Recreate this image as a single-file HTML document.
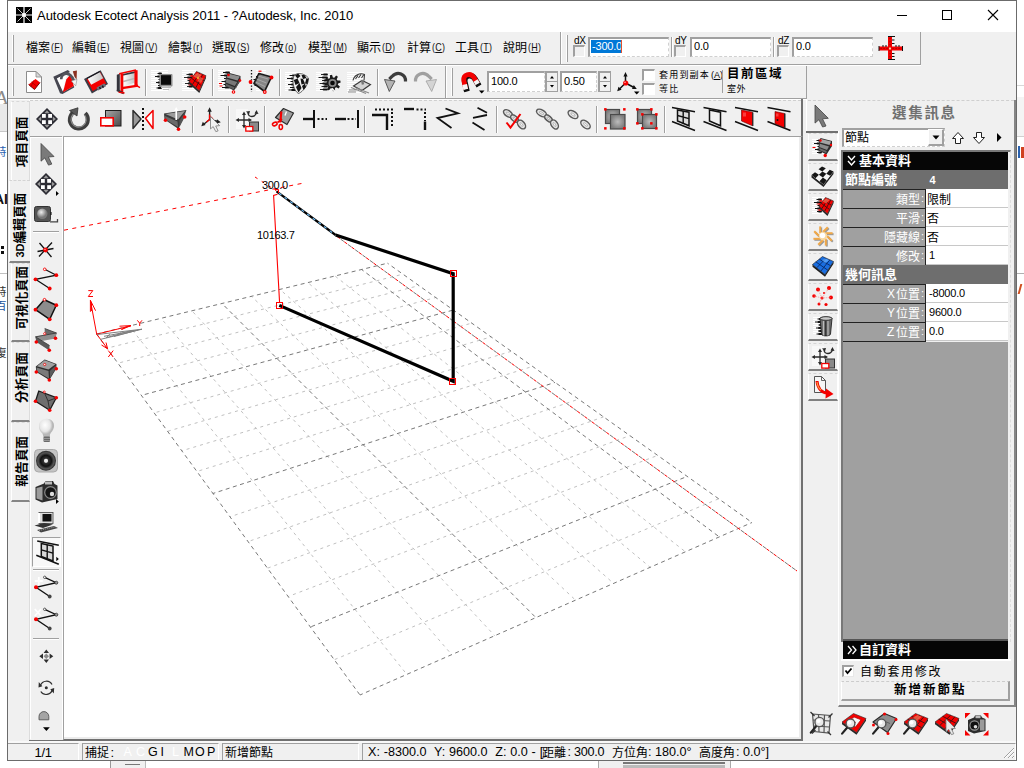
<!DOCTYPE html>
<html><head><meta charset="utf-8"><title>Autodesk Ecotect Analysis 2011</title><style>
html,body{margin:0;padding:0}
body{width:1024px;height:768px;overflow:hidden;position:relative;background:#fff;font-family:"Liberation Sans",sans-serif}
div,span,svg{position:absolute;box-sizing:border-box}
span{white-space:pre;line-height:1}
svg{overflow:visible}
svg text{font-family:"Liberation Sans","Noto Sans CJK TC",sans-serif}
</style></head><body>
<div style="left:0px;top:104px;width:7px;height:28px;background:#e9e9e9"></div>
<div style="left:0px;top:131px;width:7px;height:1px;background:#c8c8c8"></div>
<div style="left:0px;top:273px;width:7px;height:1px;background:#c0c0c0"></div>
<span style="left:-5px;top:88px;font-family:'Liberation Serif',serif;font-size:19px;color:#8a8a8a">A</span>
<span style="left:-6px;top:192px;font-family:'Liberation Sans',sans-serif;font-weight:bold;font-size:14px;color:#111">AI</span>
<div style="left:1px;top:246px;width:3px;height:3px;background:#111"></div>
<div style="left:1px;top:251px;width:3px;height:3px;background:#111"></div>
<svg aria-label="特" style="left:-5px;top:146px" width="15" height="16" viewBox="0 0 15 16"><text x="0" y="10.12" font-size="11.5" fill="#2a62b0">特</text></svg>
<svg aria-label="特" style="left:-5px;top:286px" width="15" height="16" viewBox="0 0 15 16"><text x="0" y="10.12" font-size="11.5" fill="#333">特</text></svg>
<svg aria-label="百" style="left:-5px;top:300px" width="15" height="16" viewBox="0 0 15 16"><text x="0" y="10.12" font-size="11.5" fill="#24569c">百</text></svg>
<svg aria-label="復" style="left:-5px;top:347px" width="15" height="16" viewBox="0 0 15 16"><text x="0" y="10.12" font-size="11.5" fill="#333">復</text></svg>
<div style="left:1017px;top:97px;width:7px;height:39px;background:#f4f4f4"></div>
<div style="left:1017px;top:136px;width:7px;height:1px;background:#d0d0d0"></div>
<div style="left:1017px;top:85px;width:7px;height:1px;background:#d8d8d8"></div>
<div style="left:1017px;top:273px;width:7px;height:1px;background:#b0b0b0"></div>
<div style="left:1018px;top:146px;width:2px;height:12px;background:#2a62b0"></div>
<div style="left:1021px;top:147px;width:3px;height:11px;background:#d04020"></div>
<div style="left:1019px;top:284px;width:2px;height:10px;background:#d05020;transform:skewX(-15deg)"></div>
<div style="left:110px;top:761px;width:36px;height:7px;background:#f0f0f0;border-left:1px solid #999;border-right:1px solid #bbb"></div>
<div style="left:125px;top:764px;width:15px;height:1px;background:#777"></div>
<div style="left:598px;top:761px;width:133px;height:7px;background:#f0f0f0;border-left:1px solid #aaa;border-right:1px solid #aaa"></div>
<div style="left:623px;top:762px;width:102px;height:2px;background:#777"></div>
<div style="left:623px;top:765px;width:102px;height:3px;background:#bbb"></div>
<div style="left:7px;top:0px;width:1010px;height:761px;background:#f0f0f0;border:1px solid #6b6b6b"></div>
<div style="left:8px;top:1px;width:1008px;height:31px;background:#fff"></div>
<svg style="left:16px;top:7px" width="16" height="16" viewBox="0 0 16 16"><rect width="16" height="16" fill="#000"/><path d="M0 8H16M8 0V16" stroke="#fff" stroke-width="1.2"/><path d="M1.5 1.5L14.5 14.5M14.5 1.5L1.5 14.5" stroke="#ddd" stroke-width="0.9"/><circle cx="8" cy="8" r="2" fill="#fff"/></svg>
<span style="left:37px;top:9px;font-size:13px;color:#000;letter-spacing:-0.03px">Autodesk Ecotect Analysis 2011 - ?Autodesk, Inc. 2010</span>
<svg style="left:890px;top:5px" width="120" height="22" viewBox="890 5 120 22"><path d="M897 15.5H907" stroke="#000" stroke-width="1"/><rect x="942.5" y="10.5" width="9" height="9" fill="none" stroke="#000" stroke-width="1"/><path d="M988 10L998 20M998 10L988 20" stroke="#000" stroke-width="1.1"/></svg>
<div style="left:8px;top:64px;width:913px;height:1px;background:#a0a0a0"></div>
<div style="left:8px;top:65px;width:913px;height:1px;background:#fff"></div>
<div style="left:12px;top:35px;width:1px;height:27px;background:#fff"></div>
<div style="left:13px;top:35px;width:1px;height:27px;background:#a0a0a0"></div>
<div style="left:560px;top:32px;width:1px;height:32px;background:#a0a0a0"></div>
<div style="left:561px;top:32px;width:1px;height:32px;background:#fff"></div>
<div style="left:566px;top:35px;width:1px;height:27px;background:#fff"></div>
<div style="left:567px;top:35px;width:1px;height:27px;background:#a0a0a0"></div>
<div style="left:920px;top:32px;width:1px;height:33px;background:#a0a0a0"></div>
<svg aria-label="檔案" style="left:26px;top:41px" width="28" height="17" viewBox="0 0 28 17"><text x="0" y="10.56" font-size="12" fill="#000">檔案</text></svg>
<span style="left:50.5px;top:41.5px;font-size:11.5px;color:#111;transform:scaleX(0.78);transform-origin:0 0;letter-spacing:0.3px">(<u>F</u>)</span>
<svg aria-label="編輯" style="left:72px;top:41px" width="28" height="17" viewBox="0 0 28 17"><text x="0" y="10.56" font-size="12" fill="#000">編輯</text></svg>
<span style="left:96.5px;top:41.5px;font-size:11.5px;color:#111;transform:scaleX(0.78);transform-origin:0 0;letter-spacing:0.3px">(<u>E</u>)</span>
<svg aria-label="視圖" style="left:120px;top:41px" width="28" height="17" viewBox="0 0 28 17"><text x="0" y="10.56" font-size="12" fill="#000">視圖</text></svg>
<span style="left:144.5px;top:41.5px;font-size:11.5px;color:#111;transform:scaleX(0.78);transform-origin:0 0;letter-spacing:0.3px">(<u>V</u>)</span>
<svg aria-label="繪製" style="left:168px;top:41px" width="28" height="17" viewBox="0 0 28 17"><text x="0" y="10.56" font-size="12" fill="#000">繪製</text></svg>
<span style="left:192.5px;top:41.5px;font-size:11.5px;color:#111;transform:scaleX(0.78);transform-origin:0 0;letter-spacing:0.3px">(<u>r</u>)</span>
<svg aria-label="選取" style="left:212px;top:41px" width="28" height="17" viewBox="0 0 28 17"><text x="0" y="10.56" font-size="12" fill="#000">選取</text></svg>
<span style="left:236.5px;top:41.5px;font-size:11.5px;color:#111;transform:scaleX(0.78);transform-origin:0 0;letter-spacing:0.3px">(<u>S</u>)</span>
<svg aria-label="修改" style="left:260px;top:41px" width="28" height="17" viewBox="0 0 28 17"><text x="0" y="10.56" font-size="12" fill="#000">修改</text></svg>
<span style="left:284.5px;top:41.5px;font-size:11.5px;color:#111;transform:scaleX(0.78);transform-origin:0 0;letter-spacing:0.3px">(<u>o</u>)</span>
<svg aria-label="模型" style="left:308px;top:41px" width="28" height="17" viewBox="0 0 28 17"><text x="0" y="10.56" font-size="12" fill="#000">模型</text></svg>
<span style="left:332.5px;top:41.5px;font-size:11.5px;color:#111;transform:scaleX(0.78);transform-origin:0 0;letter-spacing:0.3px">(<u>M</u>)</span>
<svg aria-label="顯示" style="left:357px;top:41px" width="28" height="17" viewBox="0 0 28 17"><text x="0" y="10.56" font-size="12" fill="#000">顯示</text></svg>
<span style="left:381.5px;top:41.5px;font-size:11.5px;color:#111;transform:scaleX(0.78);transform-origin:0 0;letter-spacing:0.3px">(<u>D</u>)</span>
<svg aria-label="計算" style="left:407px;top:41px" width="28" height="17" viewBox="0 0 28 17"><text x="0" y="10.56" font-size="12" fill="#000">計算</text></svg>
<span style="left:431.5px;top:41.5px;font-size:11.5px;color:#111;transform:scaleX(0.78);transform-origin:0 0;letter-spacing:0.3px">(<u>C</u>)</span>
<svg aria-label="工具" style="left:455px;top:41px" width="28" height="17" viewBox="0 0 28 17"><text x="0" y="10.56" font-size="12" fill="#000">工具</text></svg>
<span style="left:479.5px;top:41.5px;font-size:11.5px;color:#111;transform:scaleX(0.78);transform-origin:0 0;letter-spacing:0.3px">(<u>T</u>)</span>
<svg aria-label="說明" style="left:503px;top:41px" width="28" height="17" viewBox="0 0 28 17"><text x="0" y="10.56" font-size="12" fill="#000">說明</text></svg>
<span style="left:527.5px;top:41.5px;font-size:11.5px;color:#111;transform:scaleX(0.78);transform-origin:0 0;letter-spacing:0.3px">(<u>H</u>)</span>
<span style="left:574px;top:36px;font-size:10px;color:#000;letter-spacing:-0.4px">dX</span>
<div style="left:573px;top:45px;width:12px;height:12px;background:#f0f0f0;border-top:2px solid #a0a0a0;border-left:2px solid #a0a0a0;border-bottom:1px solid #fff;border-right:1px solid #fff"></div>
<div style="left:588px;top:37px;width:81px;height:20px;background:#fff;border-top:2px solid #a0a0a0;border-left:2px solid #a0a0a0;border-bottom:1px dashed #d0d0d0;border-right:1px dashed #d0d0d0"></div>
<div style="left:591px;top:40px;width:30px;height:13px;background:#0078d7"></div>
<span style="left:592px;top:41px;font-size:11px;color:#fff;letter-spacing:-0.2px">-300.0</span>
<div style="left:621px;top:40px;width:1px;height:13px;background:#e05030"></div>
<span style="left:675px;top:36px;font-size:10px;color:#000;letter-spacing:-0.4px">dY</span>
<div style="left:674px;top:45px;width:12px;height:12px;background:#f0f0f0;border-top:2px solid #a0a0a0;border-left:2px solid #a0a0a0;border-bottom:1px solid #fff;border-right:1px solid #fff"></div>
<div style="left:690px;top:37px;width:81px;height:20px;background:#fff;border-top:2px solid #a0a0a0;border-left:2px solid #a0a0a0;border-bottom:1px dashed #d0d0d0;border-right:1px dashed #d0d0d0"></div>
<span style="left:694px;top:41px;font-size:11px;color:#000;letter-spacing:-0.2px">0.0</span>
<span style="left:778px;top:36px;font-size:10px;color:#000;letter-spacing:-0.4px">dZ</span>
<div style="left:777px;top:45px;width:12px;height:12px;background:#f0f0f0;border-top:2px solid #a0a0a0;border-left:2px solid #a0a0a0;border-bottom:1px solid #fff;border-right:1px solid #fff"></div>
<div style="left:792px;top:37px;width:81px;height:20px;background:#fff;border-top:2px solid #a0a0a0;border-left:2px solid #a0a0a0;border-bottom:1px dashed #d0d0d0;border-right:1px dashed #d0d0d0"></div>
<span style="left:796px;top:41px;font-size:11px;color:#000;letter-spacing:-0.2px">0.0</span>
<div style="left:671px;top:37px;width:1px;height:20px;background:#a0a0a0"></div>
<div style="left:672px;top:37px;width:1px;height:20px;background:#fff"></div>
<div style="left:773px;top:37px;width:1px;height:20px;background:#a0a0a0"></div>
<div style="left:774px;top:37px;width:1px;height:20px;background:#fff"></div>
<div style="left:8px;top:98px;width:799px;height:1px;background:#a0a0a0"></div>
<div style="left:8px;top:99px;width:799px;height:1px;background:#fff"></div>
<div style="left:12px;top:68px;width:1px;height:28px;background:#fff"></div>
<div style="left:13px;top:68px;width:1px;height:28px;background:#a0a0a0"></div>
<div style="left:445px;top:66px;width:1px;height:32px;background:#a0a0a0"></div>
<div style="left:446px;top:66px;width:1px;height:32px;background:#fff"></div>
<div style="left:451px;top:68px;width:1px;height:28px;background:#fff"></div>
<div style="left:452px;top:68px;width:1px;height:28px;background:#a0a0a0"></div>
<div style="left:806px;top:66px;width:1px;height:33px;background:#a0a0a0"></div>
<div style="left:145px;top:69px;width:1px;height:27px;background:#a0a0a0"></div>
<div style="left:146px;top:69px;width:1px;height:27px;background:#fff"></div>
<div style="left:212px;top:69px;width:1px;height:27px;background:#a0a0a0"></div>
<div style="left:213px;top:69px;width:1px;height:27px;background:#fff"></div>
<div style="left:279px;top:69px;width:1px;height:27px;background:#a0a0a0"></div>
<div style="left:280px;top:69px;width:1px;height:27px;background:#fff"></div>
<div style="left:377px;top:69px;width:1px;height:27px;background:#a0a0a0"></div>
<div style="left:378px;top:69px;width:1px;height:27px;background:#fff"></div>
<div style="left:487px;top:71px;width:58px;height:21px;background:#fff;border-top:2px solid #a0a0a0;border-left:2px solid #a0a0a0;border-bottom:1px dashed #d0d0d0;border-right:1px dashed #d0d0d0"></div>
<span style="left:491px;top:76px;font-size:11px;color:#000;letter-spacing:-0.2px">100.0</span>
<div style="left:560px;top:71px;width:37px;height:21px;background:#fff;border-top:2px solid #a0a0a0;border-left:2px solid #a0a0a0;border-bottom:1px dashed #d0d0d0;border-right:1px dashed #d0d0d0"></div>
<span style="left:564px;top:76px;font-size:11px;color:#000;letter-spacing:-0.2px">0.50</span>
<div style="left:545px;top:71px;width:13px;height:21px;background:#f0f0f0;border:1px solid #a0a0a0;border-left:2px solid #a0a0a0;border-top:2px solid #a0a0a0"></div>
<div style="left:547px;top:81px;width:10px;height:1px;background:#a0a0a0"></div>
<svg style="left:545px;top:71px" width="13" height="21" viewBox="0 0 13 21"><path d="M5 7.5L7 5L9 7.5ZM5 14L7 16.5L9 14Z" fill="#000"/></svg>
<div style="left:598px;top:71px;width:13px;height:21px;background:#f0f0f0;border:1px solid #a0a0a0;border-left:2px solid #a0a0a0;border-top:2px solid #a0a0a0"></div>
<div style="left:600px;top:81px;width:10px;height:1px;background:#a0a0a0"></div>
<svg style="left:598px;top:71px" width="13" height="21" viewBox="0 0 13 21"><path d="M5 7.5L7 5L9 7.5ZM5 14L7 16.5L9 14Z" fill="#000"/></svg>
<div style="left:642px;top:69px;width:13px;height:12px;background:#fff;border-top:2px solid #a0a0a0;border-left:2px solid #a0a0a0;border-bottom:1px solid #fff;border-right:1px solid #fff"></div>
<div style="left:642px;top:83px;width:13px;height:12px;background:#fff;border-top:2px solid #a0a0a0;border-left:2px solid #a0a0a0;border-bottom:1px solid #fff;border-right:1px solid #fff"></div>
<svg aria-label="套用到副本" style="left:659px;top:70px" width="53" height="13" viewBox="0 0 53 13"><text x="0" y="7.92" font-size="9" letter-spacing="1.2" fill="#000">套用到副本</text></svg>
<span style="left:711px;top:71px;font-size:9px;color:#000;letter-spacing:0px">(<u>A</u>)</span>
<svg aria-label="等比" style="left:659px;top:84px" width="23" height="13" viewBox="0 0 23 13"><text x="0" y="7.92" font-size="9" letter-spacing="1.2" fill="#000">等比</text></svg>
<div style="left:722px;top:70px;width:1px;height:23px;background:#a0a0a0"></div>
<svg aria-label="目前區域" style="left:727px;top:67px" width="59" height="18" viewBox="0 0 59 18"><text x="0" y="11" font-size="12.5" font-weight="bold" letter-spacing="1.5" fill="#000">目前區域</text></svg>
<svg aria-label="室外" style="left:727px;top:84px" width="22" height="13" viewBox="0 0 22 13"><text x="0" y="7.92" font-size="9" letter-spacing="0.5" fill="#000">室外</text></svg>
<div style="left:30px;top:100px;width:771px;height:1px;border-top:1px dashed #cfcfcf"></div>
<div style="left:29px;top:100px;width:1px;height:402px;background:#fff"></div>
<div style="left:801px;top:99px;width:2px;height:40px;background:#707070"></div>
<div style="left:192px;top:106px;width:1px;height:27px;background:#a0a0a0"></div>
<div style="left:193px;top:106px;width:1px;height:27px;background:#fff"></div>
<div style="left:228px;top:106px;width:1px;height:27px;background:#a0a0a0"></div>
<div style="left:229px;top:106px;width:1px;height:27px;background:#fff"></div>
<div style="left:264px;top:106px;width:1px;height:27px;background:#a0a0a0"></div>
<div style="left:265px;top:106px;width:1px;height:27px;background:#fff"></div>
<div style="left:364px;top:106px;width:1px;height:27px;background:#a0a0a0"></div>
<div style="left:365px;top:106px;width:1px;height:27px;background:#fff"></div>
<div style="left:496px;top:106px;width:1px;height:27px;background:#a0a0a0"></div>
<div style="left:497px;top:106px;width:1px;height:27px;background:#fff"></div>
<div style="left:596px;top:106px;width:1px;height:27px;background:#a0a0a0"></div>
<div style="left:597px;top:106px;width:1px;height:27px;background:#fff"></div>
<div style="left:664px;top:106px;width:1px;height:27px;background:#a0a0a0"></div>
<div style="left:665px;top:106px;width:1px;height:27px;background:#fff"></div>
<div style="left:11px;top:101px;width:19px;height:79px;background:#f0f0f0;border-left:1px solid #fff;border-top:1px dashed #d8d8d8;border-right:1px solid #dcdcdc"></div>
<div style="left:9px;top:180px;width:21px;height:83px;background:#f0f0f0;border-left:1px solid #fff;border-top:1px dashed #d4d4d4;border-bottom:2px solid #858585"></div>
<div style="left:11px;top:263px;width:19px;height:79px;background:#f0f0f0;border-left:1px solid #fff;border-top:1px dashed #d8d8d8;border-right:1px solid #dcdcdc;border-bottom:2px solid #858585"></div>
<div style="left:11px;top:342px;width:19px;height:80px;background:#f0f0f0;border-left:1px solid #fff;border-top:1px dashed #d8d8d8;border-right:1px solid #dcdcdc;border-bottom:2px solid #858585"></div>
<div style="left:11px;top:422px;width:19px;height:80px;background:#f0f0f0;border-left:1px solid #fff;border-top:1px dashed #d8d8d8;border-right:1px solid #dcdcdc;border-bottom:2px solid #858585"></div>
<div style="left:29px;top:502px;width:1px;height:238px;background:#dcdcdc"></div>
<svg aria-label="項目頁面" style="left:0;top:0" width="40" height="520" viewBox="0 0 40 520"><text transform="translate(25.5,167.3) rotate(-90)" x="0" y="0" font-size="12.7" font-weight="bold" fill="#000">項目頁面</text></svg>
<svg aria-label="3D編輯頁面" style="left:0;top:0" width="40" height="520" viewBox="0 0 40 520"><text transform="translate(23.5,257.5) rotate(-90)" x="0" y="0" font-size="12.7" font-weight="bold" fill="#000"><tspan font-size="11">3D</tspan>編輯頁面</text></svg>
<svg aria-label="可視化頁面" style="left:0;top:0" width="40" height="520" viewBox="0 0 40 520"><text transform="translate(25.5,329.6) rotate(-90)" x="0" y="0" font-size="12.7" font-weight="bold" fill="#000">可視化頁面</text></svg>
<svg aria-label="分析頁面" style="left:0;top:0" width="40" height="520" viewBox="0 0 40 520"><text transform="translate(25.5,402.9) rotate(-90)" x="0" y="0" font-size="12.7" font-weight="bold" fill="#000">分析頁面</text></svg>
<svg aria-label="報告頁面" style="left:0;top:0" width="40" height="520" viewBox="0 0 40 520"><text transform="translate(25.5,486.7) rotate(-90)" x="0" y="0" font-size="12.7" font-weight="bold" fill="#000">報告頁面</text></svg>
<div style="left:30px;top:136px;width:32px;height:1px;background:#a0a0a0"></div>
<div style="left:30px;top:137px;width:32px;height:1px;background:#fff"></div>
<div style="left:30px;top:137px;width:1px;height:602px;background:#fff"></div>
<div style="left:62px;top:137px;width:1px;height:602px;background:#fff"></div>
<div style="left:33px;top:231px;width:26px;height:1px;background:#a0a0a0"></div>
<div style="left:33px;top:232px;width:26px;height:1px;background:#fff"></div>
<div style="left:33px;top:569px;width:26px;height:1px;background:#a0a0a0"></div>
<div style="left:33px;top:570px;width:26px;height:1px;background:#fff"></div>
<div style="left:33px;top:638px;width:26px;height:1px;background:#a0a0a0"></div>
<div style="left:33px;top:639px;width:26px;height:1px;background:#fff"></div>
<div style="left:32px;top:537px;width:29px;height:30px;background:#f8f8f8;border-top:1px solid #a0a0a0;border-left:1px solid #a0a0a0;border-right:1px solid #fff;border-bottom:1px solid #fff"></div>
<div style="left:63px;top:136px;width:740px;height:605px;background:#ececec;border-left:1px solid #a0a0a0;border-top:1px solid #a0a0a0;border-right:2px solid #707070;border-bottom:2px solid #707070"></div>
<div style="left:64px;top:137px;width:735px;height:600px;background:#fff"></div>
<div style="left:29px;top:740px;width:773px;height:1px;background:#707070"></div>
<div style="left:808px;top:100px;width:206px;height:1px;border-top:1px dashed #cfcfcf"></div>
<div style="left:806px;top:99px;width:1px;height:33px;background:#fff"></div>
<div style="left:838px;top:131px;width:178px;height:576px;border-left:1px solid #fff;border-bottom:2px solid #858585"></div>
<div style="left:1014px;top:100px;width:2px;height:607px;background:#858585"></div>
<div style="left:806px;top:101px;width:32px;height:32px;border-bottom:2px solid #707070"></div>
<div style="left:808px;top:133px;width:30px;height:28px;border-top:1px dashed #d4d4d4;border-left:1px solid #fff;border-bottom:2px solid #808080;border-right:1px solid #fff"></div>
<div style="left:808px;top:163px;width:30px;height:28px;border-top:1px dashed #d4d4d4;border-left:1px solid #fff;border-bottom:2px solid #808080;border-right:1px solid #fff"></div>
<div style="left:808px;top:193px;width:30px;height:28px;border-top:1px dashed #d4d4d4;border-left:1px solid #fff;border-bottom:2px solid #808080;border-right:1px solid #fff"></div>
<div style="left:808px;top:223px;width:30px;height:28px;border-top:1px dashed #d4d4d4;border-left:1px solid #fff;border-bottom:2px solid #808080;border-right:1px solid #fff"></div>
<div style="left:808px;top:253px;width:30px;height:28px;border-top:1px dashed #d4d4d4;border-left:1px solid #fff;border-bottom:2px solid #808080;border-right:1px solid #fff"></div>
<div style="left:808px;top:283px;width:30px;height:28px;border-top:1px dashed #d4d4d4;border-left:1px solid #fff;border-bottom:2px solid #808080;border-right:1px solid #fff"></div>
<div style="left:808px;top:313px;width:30px;height:28px;border-top:1px dashed #d4d4d4;border-left:1px solid #fff;border-bottom:2px solid #808080;border-right:1px solid #fff"></div>
<div style="left:808px;top:343px;width:30px;height:28px;border-top:1px dashed #d4d4d4;border-left:1px solid #fff;border-bottom:2px solid #808080;border-right:1px solid #fff"></div>
<div style="left:808px;top:373px;width:30px;height:28px;border-top:1px dashed #d4d4d4;border-left:1px solid #fff;border-bottom:2px solid #808080;border-right:1px solid #fff"></div>
<svg aria-label="選集訊息" style="left:892px;top:105px" width="67" height="20" viewBox="0 0 67 20"><text x="0" y="12.76" font-size="14.5" font-weight="bold" letter-spacing="1.7" fill="#707070">選集訊息</text></svg>
<div style="left:842px;top:128px;width:103px;height:19px;background:#fff;border-top:2px solid #a0a0a0;border-left:2px solid #a0a0a0;border-bottom:1px dashed #d0d0d0;border-right:1px dashed #d0d0d0"></div>
<svg aria-label="節點" style="left:845px;top:131px" width="28" height="17" viewBox="0 0 28 17"><text x="0" y="10.56" font-size="12" fill="#000">節點</text></svg>
<div style="left:928px;top:129px;width:16px;height:17px;background:#f0f0f0;border:1px solid #a0a0a0;border-left:1px solid #fff;border-top:1px solid #fff;border-right:2px solid #a0a0a0;border-bottom:2px solid #a0a0a0"></div>
<svg style="left:928px;top:129px" width="16" height="17" viewBox="0 0 16 17"><path d="M4.5 6.5H11.5L8 10.5Z" fill="#000"/></svg>
<svg style="left:950px;top:130px" width="56" height="16" viewBox="950 130 56 16"><path d="M958 132.5L963.5 138.5H960.5V143.5H955.5V138.5H952.5Z" fill="#fff" stroke="#222" stroke-width="1"/><path d="M979 143.5L984.5 137.5H981.5V132.5H976.5V137.5H973.5Z" fill="#fff" stroke="#222" stroke-width="1"/><path d="M997 133L1001.5 137.5L997 142Z" fill="#000"/></svg>
<div style="left:841px;top:150px;width:170px;height:492px;border-top:2px solid #787878;border-left:2px solid #787878;border-right:1px dashed #ddd"></div>
<div style="left:843px;top:152px;width:165px;height:18px;background:#060606"></div>
<svg style="left:846px;top:154px" width="12" height="14" viewBox="0 0 12 14"><path d="M2 2L5.5 6L9 2M2 7L5.5 11L9 7" fill="none" stroke="#fff" stroke-width="1.4"/></svg>
<svg aria-label="基本資料" style="left:859px;top:154px" width="56" height="18" viewBox="0 0 56 18"><text x="0" y="11.44" font-size="13" font-weight="bold" fill="#fff">基本資料</text></svg>
<div style="left:843px;top:170px;width:165px;height:19px;background:#6e6e6e"></div>
<svg aria-label="節點編號" style="left:845px;top:173px" width="56" height="18" viewBox="0 0 56 18"><text x="0" y="11.44" font-size="13" font-weight="bold" fill="#fff">節點編號</text></svg>
<span style="left:929.5px;top:175px;font-size:11px;color:#fff;font-weight:bold">4</span>
<div style="left:843px;top:189px;width:83px;height:19px;background:#a0a0a0;border-top:1px solid #222;border-right:1px solid #222;"></div>
<div style="left:926px;top:189px;width:82px;height:19px;background:#fff;border-bottom:1px solid #c8c8c8"></div>
<svg aria-label="類型" style="left:896.0px;top:193px" width="28" height="17" viewBox="0 0 28 17"><text x="0" y="10.56" font-size="12" fill="#fff">類型</text></svg>
<span style="left:921px;top:193px;font-size:11px;color:#fff;">:</span>
<svg aria-label="限制" style="left:927px;top:193px" width="28" height="17" viewBox="0 0 28 17"><text x="0" y="10.56" font-size="12" fill="#000">限制</text></svg>
<div style="left:843px;top:208px;width:83px;height:19px;background:#a0a0a0;border-top:1px solid #222;border-right:1px solid #222;"></div>
<div style="left:926px;top:208px;width:82px;height:19px;background:#fff;border-bottom:1px solid #c8c8c8"></div>
<svg aria-label="平滑" style="left:896.0px;top:212px" width="28" height="17" viewBox="0 0 28 17"><text x="0" y="10.56" font-size="12" fill="#fff">平滑</text></svg>
<span style="left:921px;top:212px;font-size:11px;color:#fff;">:</span>
<svg aria-label="否" style="left:927px;top:212px" width="16" height="17" viewBox="0 0 16 17"><text x="0" y="10.56" font-size="12" fill="#000">否</text></svg>
<div style="left:843px;top:227px;width:83px;height:19px;background:#a0a0a0;border-top:1px solid #222;border-right:1px solid #222;"></div>
<div style="left:926px;top:227px;width:82px;height:19px;background:#fff;border-bottom:1px solid #c8c8c8"></div>
<svg aria-label="隱藏線" style="left:884.0px;top:231px" width="40" height="17" viewBox="0 0 40 17"><text x="0" y="10.56" font-size="12" fill="#fff">隱藏線</text></svg>
<span style="left:921px;top:231px;font-size:11px;color:#fff;">:</span>
<svg aria-label="否" style="left:927px;top:231px" width="16" height="17" viewBox="0 0 16 17"><text x="0" y="10.56" font-size="12" fill="#000">否</text></svg>
<div style="left:843px;top:246px;width:83px;height:20px;background:#a0a0a0;border-top:1px solid #222;border-right:1px solid #222;border-bottom:1px solid #222"></div>
<div style="left:926px;top:246px;width:82px;height:19px;background:#fff;border-bottom:1px solid #c8c8c8"></div>
<svg aria-label="修改" style="left:896.0px;top:250px" width="28" height="17" viewBox="0 0 28 17"><text x="0" y="10.56" font-size="12" fill="#fff">修改</text></svg>
<span style="left:921px;top:250px;font-size:11px;color:#fff;">:</span>
<span style="left:929px;top:250px;font-size:11px;color:#000;letter-spacing:-0.2px">1</span>
<div style="left:843px;top:265px;width:165px;height:19px;background:#6e6e6e"></div>
<svg aria-label="幾何訊息" style="left:845px;top:268px" width="56" height="18" viewBox="0 0 56 18"><text x="0" y="11.44" font-size="13" font-weight="bold" fill="#fff">幾何訊息</text></svg>
<div style="left:843px;top:284px;width:83px;height:19px;background:#a0a0a0;border-top:1px solid #222;border-right:1px solid #222;"></div>
<div style="left:926px;top:284px;width:82px;height:19px;background:#fff;border-bottom:1px solid #c8c8c8"></div>
<svg aria-label="位置" style="left:896.0px;top:288px" width="28" height="17" viewBox="0 0 28 17"><text x="0" y="10.56" font-size="12" fill="#fff">位置</text></svg>
<span style="left:921px;top:288px;font-size:11px;color:#fff;">:</span>
<span style="left:887.0px;top:288px;font-size:12px;color:#fff;font-weight:normal">X</span>
<span style="left:929px;top:288px;font-size:11px;color:#000;letter-spacing:-0.2px">-8000.0</span>
<div style="left:843px;top:303px;width:83px;height:19px;background:#a0a0a0;border-top:1px solid #222;border-right:1px solid #222;"></div>
<div style="left:926px;top:303px;width:82px;height:19px;background:#fff;border-bottom:1px solid #c8c8c8"></div>
<svg aria-label="位置" style="left:896.0px;top:307px" width="28" height="17" viewBox="0 0 28 17"><text x="0" y="10.56" font-size="12" fill="#fff">位置</text></svg>
<span style="left:921px;top:307px;font-size:11px;color:#fff;">:</span>
<span style="left:887.0px;top:307px;font-size:12px;color:#fff;font-weight:normal">Y</span>
<span style="left:929px;top:307px;font-size:11px;color:#000;letter-spacing:-0.2px">9600.0</span>
<div style="left:843px;top:322px;width:83px;height:20px;background:#a0a0a0;border-top:1px solid #222;border-right:1px solid #222;border-bottom:1px solid #222"></div>
<div style="left:926px;top:322px;width:82px;height:19px;background:#fff;border-bottom:1px solid #c8c8c8"></div>
<svg aria-label="位置" style="left:896.0px;top:326px" width="28" height="17" viewBox="0 0 28 17"><text x="0" y="10.56" font-size="12" fill="#fff">位置</text></svg>
<span style="left:921px;top:326px;font-size:11px;color:#fff;">:</span>
<span style="left:887.0px;top:326px;font-size:12px;color:#fff;font-weight:normal">Z</span>
<span style="left:929px;top:326px;font-size:11px;color:#000;letter-spacing:-0.2px">0.0</span>
<div style="left:843px;top:342px;width:165px;height:297px;background:#a0a0a0"></div>
<div style="left:843px;top:639px;width:165px;height:2px;background:#555"></div>
<div style="left:843px;top:641px;width:165px;height:18px;background:#060606"></div>
<div style="left:841px;top:659px;width:170px;height:2px;background:#fff"></div>
<svg style="left:846px;top:644px" width="12" height="12" viewBox="0 0 12 12"><path d="M2 2L5.5 6L2 10M6.5 2L10 6L6.5 10" fill="none" stroke="#fff" stroke-width="1.3"/></svg>
<svg aria-label="自訂資料" style="left:859px;top:643px" width="56" height="18" viewBox="0 0 56 18"><text x="0" y="11.44" font-size="13" font-weight="bold" fill="#fff">自訂資料</text></svg>
<div style="left:842px;top:665px;width:12px;height:12px;background:#fff;border-top:2px solid #a0a0a0;border-left:2px solid #a0a0a0;border-bottom:1px solid #e8e8e8;border-right:1px solid #e8e8e8"></div>
<svg style="left:842px;top:665px" width="12" height="12" viewBox="0 0 12 12"><path d="M3.5 5.5L5.5 8L9.5 3.5" fill="none" stroke="#000" stroke-width="1.8"/></svg>
<svg aria-label="自動套用修改" style="left:860px;top:664.7px" width="85" height="17" viewBox="0 0 85 17"><text x="0" y="10.56" font-size="12" letter-spacing="1.7" fill="#000">自動套用修改</text></svg>
<div style="left:841px;top:681px;width:169px;height:20px;background:#f0f0f0;border-top:1px dashed #ccc;border-left:1px solid #fff;border-right:2px solid #a0a0a0;border-bottom:2px solid #a0a0a0"></div>
<svg aria-label="新增新節點" style="left:894px;top:682.5px" width="74" height="18" viewBox="0 0 74 18"><text x="0" y="11" font-size="12.5" font-weight="bold" letter-spacing="2" fill="#000">新增新節點</text></svg>
<div style="left:8px;top:741px;width:1008px;height:2px;background:#f8f8f8"></div>
<div style="left:8px;top:743px;width:71px;height:17px;border-top:1px solid #a0a0a0;border-right:1px solid #fff"></div>
<div style="left:82px;top:743px;width:137px;height:17px;border-top:1px solid #a0a0a0;border-left:1px solid #a0a0a0;border-right:1px solid #fff"></div>
<div style="left:222px;top:743px;width:137px;height:17px;border-top:1px solid #a0a0a0;border-left:1px solid #a0a0a0;border-right:1px solid #fff"></div>
<div style="left:362px;top:743px;width:654px;height:17px;border-top:1px solid #a0a0a0;border-left:1px solid #a0a0a0;border-right:1px solid #fff"></div>
<span style="left:34.5px;top:746.3px;font-size:13px;color:#000;letter-spacing:-0.3px">1/1</span>
<svg aria-label="捕捉" style="left:85px;top:745.8px" width="28" height="17" viewBox="0 0 28 17"><text x="0" y="10.56" font-size="12" fill="#000">捕捉</text></svg>
<span style="left:110.5px;top:746.3px;font-size:13px;color:#000;">:</span>
<span style="left:123.5px;top:746.3px;font-size:12.5px;color:#fff;">A</span>
<span style="left:136px;top:746.3px;font-size:12.5px;color:#fff;">C</span>
<span style="left:148px;top:746.3px;font-size:12.5px;color:#000;">G</span>
<span style="left:160.5px;top:746.3px;font-size:12.5px;color:#000;">I</span>
<span style="left:172px;top:746.3px;font-size:12.5px;color:#fff;">L</span>
<span style="left:183.5px;top:746.3px;font-size:12.5px;color:#000;">M</span>
<span style="left:195px;top:746.3px;font-size:12.5px;color:#000;">O</span>
<span style="left:207px;top:746.3px;font-size:12.5px;color:#000;">P</span>
<svg aria-label="新增節點" style="left:225px;top:745.8px" width="52" height="17" viewBox="0 0 52 17"><text x="0" y="10.56" font-size="12" fill="#000">新增節點</text></svg>
<span style="left:368px;top:746.3px;font-size:12.6px;color:#000;word-spacing:0.35px">X: -8300.0  Y: 9600.0  Z: 0.0 - [</span>
<svg aria-label="距離" style="left:541.5px;top:745.8px" width="28" height="17" viewBox="0 0 28 17"><text x="0" y="10.56" font-size="12" fill="#000">距離</text></svg>
<span style="left:567.5px;top:746.3px;font-size:12.6px;color:#000;letter-spacing:-0.25px">: 300.0</span>
<svg aria-label="方位角" style="left:612px;top:745.8px" width="40" height="17" viewBox="0 0 40 17"><text x="0" y="10.56" font-size="12" fill="#000">方位角</text></svg>
<span style="left:648px;top:746.3px;font-size:12.6px;color:#000;">: 180.0°</span>
<svg aria-label="高度角" style="left:699px;top:745.8px" width="40" height="17" viewBox="0 0 40 17"><text x="0" y="10.56" font-size="12" fill="#000">高度角</text></svg>
<span style="left:736px;top:746.3px;font-size:12.6px;color:#000;">: 0.0°]</span>
<svg style="left:1003px;top:747px" width="12" height="12" viewBox="0 0 12 12"><path d="M11 1L1 11M11 5L5 11M11 9L9 11" stroke="#a0a0a0" stroke-width="1"/><path d="M11 2L2 11M11 6L6 11M11 10L10 11" stroke="#fff" stroke-width="1"/></svg>
<svg style="left:64px;top:137px" width="737" height="602" viewBox="64 137 737 602" fill="none" stroke-width="1"><path d="M129.2 326.1L406.8 674.4" stroke="#c0c0c0" stroke-dasharray="3 4" stroke-dashoffset="1.7"/><path d="M161.0 318.3L451.7 654.6" stroke="#c0c0c0" stroke-dasharray="3 4" stroke-dashoffset="3.4"/><path d="M191.9 310.8L494.7 635.7" stroke="#c0c0c0" stroke-dasharray="3 4" stroke-dashoffset="5.1"/><path d="M251.3 296.3L575.5 600.1" stroke="#c0c0c0" stroke-dasharray="3 4" stroke-dashoffset="8.5"/><path d="M279.9 289.4L613.6 583.4" stroke="#c0c0c0" stroke-dasharray="3 4" stroke-dashoffset="10.2"/><path d="M307.8 282.6L650.2 567.3" stroke="#c0c0c0" stroke-dasharray="3 4" stroke-dashoffset="11.9"/><path d="M335.0 276.0L685.4 551.8" stroke="#c0c0c0" stroke-dasharray="3 4" stroke-dashoffset="13.6"/><path d="M107.0 348.2L402.9 274.2" stroke="#c0c0c0" stroke-dasharray="3 4" stroke-dashoffset="2.3"/><path d="M117.9 363.2L419.0 285.6" stroke="#c0c0c0" stroke-dasharray="3 4" stroke-dashoffset="4.6"/><path d="M129.4 378.9L435.8 297.5" stroke="#c0c0c0" stroke-dasharray="3 4" stroke-dashoffset="6.8999999999999995"/><path d="M154.2 412.9L471.8 323.1" stroke="#c0c0c0" stroke-dasharray="3 4" stroke-dashoffset="11.5"/><path d="M167.6 431.3L491.1 336.9" stroke="#c0c0c0" stroke-dasharray="3 4" stroke-dashoffset="13.799999999999999"/><path d="M181.9 450.8L511.3 351.3" stroke="#c0c0c0" stroke-dasharray="3 4" stroke-dashoffset="16.099999999999998"/><path d="M196.9 471.5L532.6 366.4" stroke="#c0c0c0" stroke-dasharray="3 4" stroke-dashoffset="18.4"/><path d="M230.0 516.8L578.6 399.2" stroke="#c0c0c0" stroke-dasharray="3 4" stroke-dashoffset="23.0"/><path d="M248.1 541.6L603.5 416.9" stroke="#c0c0c0" stroke-dasharray="3 4" stroke-dashoffset="25.299999999999997"/><path d="M267.4 568.2L629.9 435.6" stroke="#c0c0c0" stroke-dasharray="3 4" stroke-dashoffset="27.599999999999998"/><path d="M288.2 596.5L657.7 455.4" stroke="#c0c0c0" stroke-dasharray="3 4" stroke-dashoffset="29.9"/><path d="M334.3 659.7L718.6 498.8" stroke="#c0c0c0" stroke-dasharray="3 4" stroke-dashoffset="34.5"/><path d="M96.6 334.0L360.0 695.0" stroke="#787878" stroke-dasharray="4 3.5" stroke-dashoffset="0"/><path d="M222.0 303.5L535.9 617.6" stroke="#787878" stroke-dasharray="4 3.5" stroke-dashoffset="4"/><path d="M361.6 269.5L719.3 536.9" stroke="#787878" stroke-dasharray="4 3.5" stroke-dashoffset="9"/><path d="M387.5 263.2L752.0 522.5" stroke="#787878" stroke-dasharray="4 3.5" stroke-dashoffset="10"/><path d="M96.6 334.0L387.5 263.2" stroke="#787878" stroke-dasharray="4 3.5" stroke-dashoffset="0"/><path d="M141.4 395.4L453.4 310.0" stroke="#787878" stroke-dasharray="4 3.5" stroke-dashoffset="4"/><path d="M212.9 493.5L555.0 382.4" stroke="#787878" stroke-dasharray="4 3.5" stroke-dashoffset="9"/><path d="M310.4 627.0L687.3 476.4" stroke="#787878" stroke-dasharray="4 3.5" stroke-dashoffset="14"/><path d="M360.0 695.0L752.0 522.5" stroke="#787878" stroke-dasharray="4 3.5" stroke-dashoffset="16"/><path d="M64 230.2L304 183" stroke="#ff0000" stroke-dasharray="4 4.5"/><path d="M255 177L276.5 191" stroke="#ff0000" stroke-dasharray="3 5"/><path d="M337 236.5L797 571" stroke="#777" stroke-dasharray="4 5" stroke-dashoffset="4.5"/><path d="M337 236.5L797 571" stroke="#ff0000" stroke-dasharray="3.5 5.5"/><g stroke="#ff0000" stroke-width="1" fill="none"><path d="M96.7 334.2L90.4 300.3M90.4 300.3L90.4 311.8M90.4 300.3L95.6 310.7M91.4 303L91.6 311"/><path d="M96.7 334.2L131 325.8M131 325.6L119.5 326.2M131 325.6L121.5 329.5L126 327"/><path d="M96.7 334.2L107.6 348.8M107.6 348.8L101.5 345M107.6 348.8L106 342.5"/><path d="M88.3 290.6H92.8L88.3 296.5H93"/><path d="M137.3 320.3L139.7 323.2L142 320.3M139.7 323.2V326"/><path d="M108.3 350.6L113.2 357M113.2 350.6L108.3 357"/></g><g stroke="#808080" stroke-width="1" fill="none"><path d="M97.5 334.5L142 329.2L100 339.5M104 336.3L134 330.6M107 337.5L128 331.5M110 333.8L106 338M121 332.6L117 336M114 336.5L138 330"/></g><path d="M128 331.3L142 329.2L125 333.5Z" fill="#808080"/><path d="M276.5 191.3L335.6 235" stroke="#000" stroke-width="2.2" fill="none"/><path d="M279 193.2L334 233.8" stroke="#6ab8f0" stroke-width="1.2" stroke-dasharray="3 4" fill="none"/><path d="M335.6 235L453.2 273.7L453.2 381.2L279.3 305.4" stroke="#000" stroke-width="3.2" fill="none" stroke-linejoin="miter"/><path d="M279.6 303L273.6 195.5L277.5 194.3" stroke="#ff0000" stroke-width="1.1" fill="none"/><g stroke="#ff0000" fill="none" stroke-width="1"><rect x="450.5" y="270.5" width="6" height="6"/><rect x="449.5" y="378.5" width="6" height="6"/><rect x="276.5" y="302.5" width="6" height="6"/><path d="M274.5 189.5L278.5 189.5L278.5 193"/></g></svg>
<span style="left:262px;top:180px;font-size:11px;color:#000;letter-spacing:-0.35px">300.0</span>
<span style="left:257px;top:230px;font-size:11px;color:#000;letter-spacing:-0.3px">10163.7</span>
<svg style="left:0;top:0" width="1024" height="768" viewBox="0 0 1024 768"><path d="M26.5 71.5H36L41.5 77V92.5H26.5Z" fill="#fff" stroke="#8c8c8c"/><path d="M36 71.5V77H41.5Z" fill="#d8d8d8" stroke="#8c8c8c" stroke-width="0.8"/><polygon points="28.6,84.5 35.5,79 40,82.5 34.5,89.5" fill="#f40000"/><path d="M28.6 84.5L34.5 89.5L40 82.5" stroke="#700" stroke-width="1" fill="none"/><path d="M31.5 82L37 86.5M33.5 80.5L31 87" stroke="#a00" stroke-width="0.8"/><defs><linearGradient id="gw" x1="0" y1="0" x2="1" y2="0"><stop offset="0" stop-color="#fff"/><stop offset="1" stop-color="#c4c4c4"/></linearGradient></defs><polygon points="53.3,76.7 67.9,70.1 70,72 57.5,78.2 64,91.5 74,85.8 74.2,87.6 62.5,94 60,93.3" fill="#464650"/><polygon points="56.8,78.6 67.2,73.6 65.2,80.5 62.8,91.6" fill="#fff"/><polygon points="66.3,79.5 70.5,74.3 73.8,86 63,92.3" fill="#f40000"/><polygon points="72.8,71.2 76.9,70.5 76.6,79.5 74.6,77" fill="#8a3020"/><path d="M61.2 79.3C61.5 73 69.5 70 73.8 80.5" fill="none" stroke="#55555c" stroke-width="2.6"/><polygon points="71.3,81 77,79.3 75.7,85.8" fill="#f4f4f4" stroke="#777" stroke-width="0.5"/><polygon points="84,79.1 100.6,70.3 108,84 91.9,93.4" fill="#3c3c46"/><polygon points="86.7,79.6 100.3,72.3 106.2,83.6 92.7,91" fill="#f40000"/><polygon points="87.6,78.6 99.7,72.1 103.3,78.2 91.2,84.7" fill="url(#gw)"/><polygon points="96.5,87.6 104.4,83.3 106,86.3 98.1,90.6" fill="#70707a"/><path d="M99.5 87.2L100.5 89M102.3 85.6L103.4 87.6" stroke="#15151c" stroke-width="1.5"/><path d="M86.9 78.4L99.9 71.4" stroke="#15151c" stroke-width="1.1"/><polygon points="116.8,74.7 119.8,73.8 119.8,91.8 116.8,90" fill="#34343c"/><polygon points="123.3,75.4 134.4,72.7 134.4,82.8 123.3,86.2" fill="url(#gw)"/><path d="M123.3 81.5L134.4 78.6" stroke="#b8b8b8" stroke-width="1.6"/><path d="M121 75.3L135 72.1" stroke="#34343c" stroke-width="1.6"/><rect x="120.5" y="73.6" width="2.8" height="19.6" fill="#f40000"/><rect x="134.4" y="70.2" width="3.2" height="16.4" fill="#f40000"/><path d="M119.2 73.7L136 70.1" stroke="#f40000" stroke-width="1.5"/><path d="M122 88.2L138 85.6" stroke="#f40000" stroke-width="2.3"/><path d="M116.8 90L123.8 93.3" stroke="#34343c" stroke-width="2"/><path d="M118.5 92.2L124.5 93" stroke="#f40000" stroke-width="1.3"/><path d="M137.5 86.2L140 87.6" stroke="#f40000" stroke-width="1.4"/><path d="M151 70.5H168" stroke="#fff" stroke-width="1"/><path d="M151 72.5H168" stroke="#fff" stroke-width="1"/><path d="M151 74.5H168" stroke="#fff" stroke-width="1"/><path d="M151 76.5H168" stroke="#fff" stroke-width="1"/><path d="M151 78.5H168" stroke="#fff" stroke-width="1"/><path d="M151 80.5H168" stroke="#fff" stroke-width="1"/><path d="M151 82.5H168" stroke="#fff" stroke-width="1"/><path d="M151 84.5H168" stroke="#fff" stroke-width="1"/><path d="M151 86.5H168" stroke="#fff" stroke-width="1"/><path d="M151 88.5H168" stroke="#fff" stroke-width="1"/><path d="M151 90.5H168" stroke="#fff" stroke-width="1"/><path d="M157.5 73.5H161" stroke="#111" stroke-width="1.0"/><path d="M159.2 73.5H161" stroke="#111" stroke-width="1.9" stroke-linecap="round"/><path d="M155.0 76.5H161" stroke="#111" stroke-width="1.0"/><path d="M158.0 76.5H161" stroke="#111" stroke-width="1.9" stroke-linecap="round"/><path d="M158.5 79.5H161" stroke="#111" stroke-width="1.0"/><path d="M159.8 79.5H161" stroke="#111" stroke-width="1.9" stroke-linecap="round"/><path d="M156.0 82.5H161" stroke="#111" stroke-width="1.0"/><path d="M158.5 82.5H161" stroke="#111" stroke-width="1.9" stroke-linecap="round"/><path d="M158.0 85.5H161" stroke="#111" stroke-width="1.0"/><path d="M159.5 85.5H161" stroke="#111" stroke-width="1.9" stroke-linecap="round"/><path d="M156.5 88H161" stroke="#111" stroke-width="1.0"/><path d="M158.8 88H161" stroke="#111" stroke-width="1.9" stroke-linecap="round"/><rect x="159.5" y="74" width="13" height="12.5" rx="1" fill="#8c8c8c"/><rect x="161" y="75.2" width="10" height="9.6" fill="#0a0a0a"/><path d="M161 87.5H171M163 89.5H169" stroke="#bbb" stroke-width="1"/><path d="M182 70.5H196" stroke="#fff" stroke-width="1"/><path d="M182 72.5H196" stroke="#fff" stroke-width="1"/><path d="M182 74.5H196" stroke="#fff" stroke-width="1"/><path d="M182 76.5H196" stroke="#fff" stroke-width="1"/><path d="M182 78.5H196" stroke="#fff" stroke-width="1"/><path d="M182 80.5H196" stroke="#fff" stroke-width="1"/><path d="M182 82.5H196" stroke="#fff" stroke-width="1"/><path d="M182 84.5H196" stroke="#fff" stroke-width="1"/><path d="M182 86.5H196" stroke="#fff" stroke-width="1"/><path d="M182 88.5H196" stroke="#fff" stroke-width="1"/><path d="M182 90.5H196" stroke="#fff" stroke-width="1"/><path d="M186.5 74.5H192" stroke="#111" stroke-width="0.9"/><path d="M189.2 74.5H192" stroke="#111" stroke-width="1.8" stroke-linecap="round"/><path d="M184.0 77.5H192" stroke="#111" stroke-width="0.9"/><path d="M188.0 77.5H192" stroke="#111" stroke-width="1.8" stroke-linecap="round"/><path d="M187.5 80.5H192" stroke="#111" stroke-width="0.9"/><path d="M189.8 80.5H192" stroke="#111" stroke-width="1.8" stroke-linecap="round"/><path d="M185.0 83.5H192" stroke="#111" stroke-width="0.9"/><path d="M188.5 83.5H192" stroke="#111" stroke-width="1.8" stroke-linecap="round"/><path d="M187.0 86.5H192" stroke="#111" stroke-width="0.9"/><path d="M189.5 86.5H192" stroke="#111" stroke-width="1.8" stroke-linecap="round"/><path d="M190.0 76H193" stroke="#f40000" stroke-width="0.8"/><path d="M191.5 76H193" stroke="#f40000" stroke-width="1.7" stroke-linecap="round"/><path d="M187.5 79H193" stroke="#f40000" stroke-width="0.8"/><path d="M190.2 79H193" stroke="#f40000" stroke-width="1.7" stroke-linecap="round"/><path d="M191.0 82H193" stroke="#f40000" stroke-width="0.8"/><path d="M192.0 82H193" stroke="#f40000" stroke-width="1.7" stroke-linecap="round"/><path d="M188.5 85H193" stroke="#f40000" stroke-width="0.8"/><path d="M190.8 85H193" stroke="#f40000" stroke-width="1.7" stroke-linecap="round"/><polygon points="189,83.7 199.3,93.0 206,77.9 206,75.7 199.3,90.8 189,81.5" fill="#2a2a2a"/><polygon points="189,81.5 196.5,71.5 206,75.7 199.3,90.8" fill="#f40000" stroke="#2a2a2a" stroke-width="0.6"/><path d="M191.5 78.2L201.5 85.8M192.4 84.6L199.7 72.9" stroke="#401010" stroke-width="0.9"/><path d="M194.0 74.8L203.8 80.7M195.9 87.7L202.8 74.3" stroke="#401010" stroke-width="0.9"/><polygon points="193,76 197.5,73 201.5,75 198,79" fill="#f06a50" opacity="0.8"/><polygon points="197.5,81 200,77 203.5,78.5 201,83" fill="#f06a50" opacity="0.7"/><rect x="197.2" y="76.8" width="1.6" height="2.4" fill="#f0b030"/><path d="M218 70.5H232" stroke="#fff" stroke-width="1"/><path d="M218 72.5H232" stroke="#fff" stroke-width="1"/><path d="M218 74.5H232" stroke="#fff" stroke-width="1"/><path d="M218 76.5H232" stroke="#fff" stroke-width="1"/><path d="M218 78.5H232" stroke="#fff" stroke-width="1"/><path d="M218 80.5H232" stroke="#fff" stroke-width="1"/><path d="M218 82.5H232" stroke="#fff" stroke-width="1"/><path d="M218 84.5H232" stroke="#fff" stroke-width="1"/><path d="M218 86.5H232" stroke="#fff" stroke-width="1"/><path d="M218 88.5H232" stroke="#fff" stroke-width="1"/><path d="M218 90.5H232" stroke="#fff" stroke-width="1"/><path d="M223.0 72.5H229" stroke="#111" stroke-width="1.0"/><path d="M226.0 72.5H229" stroke="#111" stroke-width="1.9" stroke-linecap="round"/><path d="M220.5 75.5H229" stroke="#111" stroke-width="1.0"/><path d="M224.8 75.5H229" stroke="#111" stroke-width="1.9" stroke-linecap="round"/><path d="M224.0 78.5H229" stroke="#111" stroke-width="1.0"/><path d="M226.5 78.5H229" stroke="#111" stroke-width="1.9" stroke-linecap="round"/><path d="M221.5 81.5H229" stroke="#111" stroke-width="1.0"/><path d="M225.2 81.5H229" stroke="#111" stroke-width="1.9" stroke-linecap="round"/><path d="M223.5 84.5H229" stroke="#111" stroke-width="1.0"/><path d="M226.2 84.5H229" stroke="#111" stroke-width="1.9" stroke-linecap="round"/><path d="M222.0 87.5H229" stroke="#111" stroke-width="1.0"/><path d="M225.5 87.5H229" stroke="#111" stroke-width="1.9" stroke-linecap="round"/><polygon points="227.5,72.5 240.5,76 240.5,81 234,90.5 225,86 226,77.5" fill="#2c2c2c"/><polygon points="228,73.5 239.8,76.5 237.5,80.5 226.8,77.5" fill="#8e8e8e"/><polygon points="226.5,78.8 237.2,82 234.8,86 225.8,82.5" fill="#787878"/><polygon points="225.8,83.8 234.5,87.2 233.8,89.5 226,86" fill="#5e5e5e"/><polygon points="238.3,81.5 240,80 236,88.5 235,88" fill="#555"/><circle cx="228.5" cy="75" r="1.3" fill="#f40000"/><circle cx="240" cy="80.5" r="1.3" fill="#f40000"/><circle cx="233.5" cy="92" r="1.8" fill="#f40000"/><path d="M219 83.5H222M219.5 86H222.5" stroke="#f40000" stroke-width="1.1"/><circle cx="233.5" cy="92" r="0.7" fill="#fff"/><path d="M256 70.5H266" stroke="#fff" stroke-width="1"/><path d="M256 72.5H266" stroke="#fff" stroke-width="1"/><path d="M256 74.5H266" stroke="#fff" stroke-width="1"/><path d="M256 76.5H266" stroke="#fff" stroke-width="1"/><path d="M256 78.5H266" stroke="#fff" stroke-width="1"/><path d="M256 80.5H266" stroke="#fff" stroke-width="1"/><path d="M256 82.5H266" stroke="#fff" stroke-width="1"/><path d="M256 84.5H266" stroke="#fff" stroke-width="1"/><path d="M256 86.5H266" stroke="#fff" stroke-width="1"/><path d="M256 88.5H266" stroke="#fff" stroke-width="1"/><path d="M256 90.5H266" stroke="#fff" stroke-width="1"/><path d="M251.5 70V92" stroke="#111" stroke-width="1.3" stroke-dasharray="1.3 1.8"/><path d="M256.0 76.5H260" stroke="#111" stroke-width="1.0"/><path d="M258.0 76.5H260" stroke="#111" stroke-width="1.9" stroke-linecap="round"/><path d="M253.5 79.5H260" stroke="#111" stroke-width="1.0"/><path d="M256.8 79.5H260" stroke="#111" stroke-width="1.9" stroke-linecap="round"/><path d="M257.0 82.5H260" stroke="#111" stroke-width="1.0"/><path d="M258.5 82.5H260" stroke="#111" stroke-width="1.9" stroke-linecap="round"/><path d="M254.5 85.5H260" stroke="#111" stroke-width="1.0"/><path d="M257.2 85.5H260" stroke="#111" stroke-width="1.9" stroke-linecap="round"/><polygon points="259,73.5 271.5,77 264.5,91.5 254,83.5" fill="#868686" stroke="#1a1a1a" stroke-width="1.7" stroke-linejoin="round"/><path d="M258 76L268 79M256.5 79L266.5 83M255.5 82L265 86.5" stroke="#b8b8b8" stroke-width="0.7"/><circle cx="271.5" cy="77.5" r="1.9" fill="#f40000"/><circle cx="264.8" cy="92" r="1.9" fill="#f40000"/><circle cx="250.5" cy="82" r="1.9" fill="#f40000"/><path d="M258.5 71.2H261.5" stroke="#f40000" stroke-width="1.2"/><circle cx="264.8" cy="92" r="0.7" fill="#fff"/><path d="M285 72.5H302" stroke="#fff" stroke-width="1"/><path d="M285 74.5H302" stroke="#fff" stroke-width="1"/><path d="M285 76.5H302" stroke="#fff" stroke-width="1"/><path d="M285 78.5H302" stroke="#fff" stroke-width="1"/><path d="M285 80.5H302" stroke="#fff" stroke-width="1"/><path d="M285 82.5H302" stroke="#fff" stroke-width="1"/><path d="M285 84.5H302" stroke="#fff" stroke-width="1"/><path d="M285 86.5H302" stroke="#fff" stroke-width="1"/><path d="M285 88.5H302" stroke="#fff" stroke-width="1"/><path d="M285 90.5H302" stroke="#fff" stroke-width="1"/><path d="M289.5 75.5H296" stroke="#111" stroke-width="1.0"/><path d="M292.8 75.5H296" stroke="#111" stroke-width="1.9" stroke-linecap="round"/><path d="M287.0 78.5H296" stroke="#111" stroke-width="1.0"/><path d="M291.5 78.5H296" stroke="#111" stroke-width="1.9" stroke-linecap="round"/><path d="M290.5 81.5H296" stroke="#111" stroke-width="1.0"/><path d="M293.2 81.5H296" stroke="#111" stroke-width="1.9" stroke-linecap="round"/><path d="M288.0 84.5H296" stroke="#111" stroke-width="1.0"/><path d="M292.0 84.5H296" stroke="#111" stroke-width="1.9" stroke-linecap="round"/><path d="M290.0 87.5H296" stroke="#111" stroke-width="1.0"/><path d="M293.0 87.5H296" stroke="#111" stroke-width="1.9" stroke-linecap="round"/><path d="M288.5 90H296" stroke="#111" stroke-width="1.0"/><path d="M292.2 90H296" stroke="#111" stroke-width="1.9" stroke-linecap="round"/><path d="M293.5 77C295 72 304 72.5 308.5 78C309 84 303 92 298.5 93.5C294 91 292 83 293.5 77Z" fill="#efefef" stroke="#333" stroke-width="0.7"/><path d="M295 75.5L298 73.5L300.5 76L297.5 78.5ZM301.5 75L304.5 75L306.5 78L303 79ZM293.8 80L297.5 78.5L299.5 83L295.5 85ZM300.5 78.5L303 79L305 83.5L301.5 84.5ZM306.5 78L308.5 79L307.5 84L305 83.5ZM296 87L299.5 83L301.5 88L298.5 92.5ZM302 86L305 83.5L306 87L303.5 90Z" fill="#141414"/><path d="M316 72.5H332" stroke="#fff" stroke-width="1"/><path d="M316 74.5H332" stroke="#fff" stroke-width="1"/><path d="M316 76.5H332" stroke="#fff" stroke-width="1"/><path d="M316 78.5H332" stroke="#fff" stroke-width="1"/><path d="M316 80.5H332" stroke="#fff" stroke-width="1"/><path d="M316 82.5H332" stroke="#fff" stroke-width="1"/><path d="M316 84.5H332" stroke="#fff" stroke-width="1"/><path d="M316 86.5H332" stroke="#fff" stroke-width="1"/><path d="M316 88.5H332" stroke="#fff" stroke-width="1"/><path d="M316 90.5H332" stroke="#fff" stroke-width="1"/><path d="M321.0 74.5H327" stroke="#111" stroke-width="0.9"/><path d="M324.0 74.5H327" stroke="#111" stroke-width="1.8" stroke-linecap="round"/><path d="M318.5 77.5H327" stroke="#111" stroke-width="0.9"/><path d="M322.8 77.5H327" stroke="#111" stroke-width="1.8" stroke-linecap="round"/><path d="M322.0 80.5H327" stroke="#111" stroke-width="0.9"/><path d="M324.5 80.5H327" stroke="#111" stroke-width="1.8" stroke-linecap="round"/><path d="M319.5 83.5H327" stroke="#111" stroke-width="0.9"/><path d="M323.2 83.5H327" stroke="#111" stroke-width="1.8" stroke-linecap="round"/><path d="M321.5 86.5H327" stroke="#111" stroke-width="0.9"/><path d="M324.2 86.5H327" stroke="#111" stroke-width="1.8" stroke-linecap="round"/><path d="M320.0 89.5H327" stroke="#111" stroke-width="0.9"/><path d="M323.5 89.5H327" stroke="#111" stroke-width="1.8" stroke-linecap="round"/><path d="M340.3 80.4L340.7 82.5L338.1 83.4L337.8 84.8L339.9 86.6L338.7 88.4L336.2 87.2L335.0 88.0L335.1 90.8L333.0 91.2L332.1 88.6L330.7 88.3L328.9 90.4L327.1 89.2L328.3 86.7L327.5 85.5L324.7 85.6L324.3 83.5L326.9 82.6L327.2 81.2L325.1 79.4L326.3 77.6L328.8 78.8L330.0 78.0L329.9 75.2L332.0 74.8L332.9 77.4L334.3 77.7L336.1 75.6L337.9 76.8L336.7 79.3L337.5 80.5Z" fill="#1c1c1c"/><circle cx="332.5" cy="83" r="4" fill="#8a8a8a"/><circle cx="332.5" cy="83" r="2.3" fill="#0a0a0a"/><path d="M328.0 92.5L332.5 87.8L337.0 92.5L335.1 92.5L332.5 90L329.9 92.5Z" fill="#f4f4f4"/><path d="M347 72.5H364" stroke="#fff" stroke-width="1"/><path d="M347 74.5H364" stroke="#fff" stroke-width="1"/><path d="M347 76.5H364" stroke="#fff" stroke-width="1"/><path d="M347 78.5H364" stroke="#fff" stroke-width="1"/><path d="M347 80.5H364" stroke="#fff" stroke-width="1"/><path d="M347 82.5H364" stroke="#fff" stroke-width="1"/><path d="M347 84.5H364" stroke="#fff" stroke-width="1"/><path d="M347 86.5H364" stroke="#fff" stroke-width="1"/><path d="M347 88.5H364" stroke="#fff" stroke-width="1"/><path d="M347 90.5H364" stroke="#fff" stroke-width="1"/><path d="M347 92.5H364" stroke="#fff" stroke-width="1"/><g fill="none" stroke="#3a3a3a" stroke-width="1.1"><path d="M353 80.5C354 75 360 72.5 364.5 74.5L364 80.5M355.5 79L358 75.5M358.5 78L361 74.5M361.5 78L363.5 75"/><path d="M353.5 86L362 80.5L370.5 84.5L362 90.5Z" fill="#d4d4d4"/><path d="M362 80L363 84.5" stroke-width="2.4" stroke="#777"/><path d="M351 87.5L366 93.5M349 90H358M348 92H356M356 88L369 93" stroke="#8a8a8a"/></g><g transform="translate(384.5,0)"><path d="M21 81.5C21.5 74 13 70.5 7.5 76.5L4.8 79.2" fill="none" stroke="#3c3c3c" stroke-width="3.2"/><polygon points="0,79.5 10.5,81 4.8,91.5" fill="#b4b4b4" stroke="#3c3c3c" stroke-width="0.8"/></g><g transform="translate(436.5,0) scale(-1,1)"><path d="M21 81.5C21.5 74 13 70.5 7.5 76.5L4.8 79.2" fill="none" stroke="#a0a0a0" stroke-width="3.2"/><polygon points="0,79.5 10.5,81 4.8,91.5" fill="#d4d4d4" stroke="#a0a0a0" stroke-width="0.8"/></g><path d="M466.3 90.5L464 80.5C463.2 74.5 470.5 72.5 474 77.5L478.3 85" fill="none" stroke="#111" stroke-width="5.6" stroke-linejoin="round" transform="translate(0.7,1)"/><path d="M465.8 89.5L463.8 80.5C463 74.5 470.3 72.3 473.8 77.3L477.8 84" fill="none" stroke="#f40000" stroke-width="4.8" stroke-linejoin="round"/><path d="M464.6 84.5L465.8 89.8" stroke="#f6f6f6" stroke-width="4.8"/><path d="M475.6 80.5L477.9 84.4" stroke="#f6f6f6" stroke-width="4.8"/><path d="M463.8 90.8L468.6 89.7M476.2 85.9L480.3 83.5" stroke="#111" stroke-width="1.8"/><path d="M479 90.5H484.5L481.7 93.5Z" fill="#000"/><g stroke="#111" stroke-width="1.5" fill="#111"><path d="M625.5 83V75M625.5 83L619 89.5M625.5 83L634 87.5" fill="none"/><path d="M625.5 72L627.6 76.5H623.4ZM617.2 91.3L618.5 86.8L621.6 89.8ZM636.8 89L632 89L633.8 85Z" stroke="none"/></g><circle cx="625.7" cy="83" r="2.6" fill="#f40000"/><circle cx="625" cy="82.3" r="0.8" fill="#fbb"/><path d="M634 91.5H639.5L636.7 94.5Z" fill="#000"/><g><rect x="888" y="36.5" width="4" height="23" fill="#f40000"/><rect x="879" y="46.5" width="23.5" height="4" fill="#f40000"/><path d="M888 36.5H895M888 59.5H895M879 46V51M902.5 46V51M892 40H894.5M892 43.5H894.5M892 53.5H894.5M892 56.5H894.5M883 45V47M886 45V47M896 45V47M899 45V47" stroke="#111" stroke-width="1"/><path d="M890 38V58M880.5 48.5H901" stroke="#800" stroke-width="0.8" stroke-dasharray="1.2 1.8"/><rect x="889" y="47.5" width="2" height="2" fill="#f8d0a0"/></g><polygon points="47,108 58,119 47,130 36,119" fill="#2c2c34"/><polygon points="47.0,110.2 49.6,113.2 44.4,113.2" fill="#9a9a9a"/><polygon points="55.8,119.0 52.8,121.6 52.8,116.4" fill="#9a9a9a"/><polygon points="47.0,127.8 44.4,124.8 49.6,124.8" fill="#9a9a9a"/><polygon points="38.2,119.0 41.2,116.4 41.2,121.6" fill="#9a9a9a"/><rect x="42.0" y="114.0" width="3.8" height="3.8" fill="#fff"/><rect x="48.2" y="114.0" width="3.8" height="3.8" fill="#fff"/><rect x="42.0" y="120.2" width="3.8" height="3.8" fill="#fff"/><rect x="48.2" y="120.2" width="3.8" height="3.8" fill="#fff"/><path d="M85.2 113.2A9 9 0 1 1 75.5 111.2" fill="none" stroke="#3e3e3e" stroke-width="4"/><path d="M84.4 114.6A7.6 7.6 0 1 1 76 112.4" fill="none" stroke="#8a8a8a" stroke-width="1.2"/><polygon points="69.5,110.5 78,107.8 77,116" fill="#5a5a5a" stroke="#333" stroke-width="0.8"/><defs><linearGradient id="gq" x1="0" y1="0" x2="1" y2="1"><stop offset="0" stop-color="#a8a8a8"/><stop offset="1" stop-color="#4a4a4a"/></linearGradient></defs><rect x="105.5" y="110.5" width="15.5" height="15.5" fill="url(#gq)" stroke="#1e1e1e"/><rect x="100.8" y="117.8" width="12.4" height="8" fill="#fff" stroke="#f40000" stroke-width="1.6"/><polygon points="133,110.5 141,119 133,128.5" fill="#9a9a9a" stroke="#2a2a2a" stroke-width="1.4" stroke-linejoin="round"/><path d="M143 108V131" stroke="#111" stroke-width="2" stroke-dasharray="2 2"/><polygon points="153,110.5 145.5,118.2 153,128.5" fill="#fff" stroke="#f40000" stroke-width="1.5" stroke-linejoin="round"/><polygon points="164,113.5 186.5,110 178.5,129 164.5,119.5" fill="#3a3a3a"/><polygon points="165.5,114 185,111 178,119.5" fill="#9c9c9c"/><polygon points="165,116 177.5,121.5 178,127 165.5,119.5" fill="#6a6a6a"/><polygon points="179.5,120.5 185.5,112 184.5,117.5 179.5,127" fill="#555"/><path d="M176.2 108.5V120" stroke="#fff" stroke-width="1.6"/><polygon points="176.2,107 178.4,111 174,111" fill="#fff"/><circle cx="165.5" cy="120.3" r="1.8" fill="#f40000"/><circle cx="184.7" cy="117" r="1.8" fill="#f40000"/><circle cx="178.5" cy="129.3" r="1.8" fill="#f40000"/><g stroke="#222" stroke-width="1.4" fill="none"><path d="M209.6 111V119.5L203.5 124.5M209.6 119.5L218 121.5"/></g><path d="M209.6 107.3L211.8 111.8H207.4ZM201.3 126.2L202.8 121.8L205.6 125ZM220.8 122.3L216.3 123.8L217 119.2Z" fill="#222"/><path d="M209.6 114.5V119.5L206.5 122M209.6 116L213 119" stroke="#f40000" stroke-width="1.4" fill="none"/><polygon points="210.5,116.5 210.5,128.9 213.2,126.6 215.8,131.6 218.1,130.9 215.7,126.0 219.6,125.6" fill="#f2f2f2" stroke="#777" stroke-width="0.8" stroke-linejoin="round"/><g transform="translate(235,108.5)"><path d="M1 1.5H13" stroke="#fff" stroke-width="1"/><path d="M1 3.5H13" stroke="#fff" stroke-width="1"/><path d="M1 5.5H13" stroke="#fff" stroke-width="1"/><path d="M1 7.5H13" stroke="#fff" stroke-width="1"/><path d="M1 9.5H13" stroke="#fff" stroke-width="1"/><path d="M1 11.5H13" stroke="#fff" stroke-width="1"/><path d="M1 13.5H13" stroke="#fff" stroke-width="1"/><path d="M1 15.5H13" stroke="#fff" stroke-width="1"/><path d="M1 17.5H13" stroke="#fff" stroke-width="1"/><path d="M1 19.5H13" stroke="#fff" stroke-width="1"/><g stroke="#2a2a2a" stroke-width="1.3" fill="none"><path d="M9 5V18M2.5 11.5H15.5"/><path d="M13 4.5C13.5 9 20 9.5 21.5 4"/></g><path d="M9 3L11 6.5H7ZM9 20L11 16.5H7ZM0.5 11.5L4 9.5V13.5ZM17 11.5L13.5 9.5V13.5ZM21.5 1.5L23.5 5.5L19.5 5ZM11 3L15 2.5L14 6Z" fill="#2a2a2a"/><rect x="14.5" y="13.5" width="9" height="9" fill="#8a8a8a" stroke="#333" stroke-width="1"/><rect x="10.8" y="18" width="7" height="4.6" fill="#fff" stroke="#f40000" stroke-width="1.3"/></g><polygon points="283.5,108.5 293.5,113 287,124.5 275.5,117.5" fill="#9e9e9e" stroke="#2c2c2c" stroke-width="1.2" stroke-linejoin="round"/><path d="M286.5 111.5L285 115.5" stroke="#fff" stroke-width="1.3"/><path d="M281.3 111.5L280.3 122.5" stroke="#f40000" stroke-width="2.2"/><path d="M282 119L277.5 122.5" stroke="#f40000" stroke-width="1.6"/><ellipse cx="274.8" cy="124" rx="2.4" ry="1.6" fill="none" stroke="#f40000" stroke-width="1.5" transform="rotate(-25 274.8 124)"/><ellipse cx="280.8" cy="127" rx="1.7" ry="2.4" fill="none" stroke="#f40000" stroke-width="1.5"/><path d="M303 119H314" stroke="#111" stroke-width="2.4"/><path d="M314 110V128" stroke="#111" stroke-width="2"/><path d="M317.5 119H327" stroke="#111" stroke-width="2" stroke-dasharray="2 2"/><path d="M335 119H346" stroke="#111" stroke-width="2.4"/><path d="M347.5 119H356" stroke="#111" stroke-width="2" stroke-dasharray="2 2"/><path d="M358 110V128" stroke="#111" stroke-width="2"/><path d="M375 109.5H393" stroke="#111" stroke-width="2" stroke-dasharray="2 2"/><path d="M392 112V127" stroke="#111" stroke-width="2" stroke-dasharray="2 2"/><path d="M372 115H387V130" stroke="#111" stroke-width="2.4" fill="none"/><path d="M404 109H414" stroke="#111" stroke-width="2.4"/><path d="M416.5 109.5H426" stroke="#111" stroke-width="2" stroke-dasharray="2 2"/><path d="M425 112V121" stroke="#111" stroke-width="2" stroke-dasharray="2 2"/><path d="M425 121.5V130" stroke="#111" stroke-width="2.4"/><path d="M445.5 108.5L458 113.3L437.5 118L451.5 128" stroke="#111" stroke-width="1.8" fill="none"/><path d="M477.5 107.8L487 112.8M487 115L473 117.8M472.5 122.5L484.5 130" stroke="#111" stroke-width="1.8" fill="none"/><ellipse cx="508" cy="113.5" rx="5" ry="3" transform="rotate(35 508 113.5)" fill="#e4e4e4" stroke="#5a5a5a" stroke-width="1.5"/><ellipse cx="508" cy="113.5" rx="2.2" ry="0.9" transform="rotate(35 508 113.5)" fill="#f4f4f4" stroke="#999" stroke-width="0.6"/><ellipse cx="514.5" cy="118.5" rx="4.5" ry="2.6" transform="rotate(40 514.5 118.5)" fill="#e4e4e4" stroke="#5a5a5a" stroke-width="1.5"/><ellipse cx="514.5" cy="118.5" rx="2.0" ry="0.8" transform="rotate(40 514.5 118.5)" fill="#f4f4f4" stroke="#999" stroke-width="0.6"/><ellipse cx="521.5" cy="124.5" rx="5" ry="3.2" transform="rotate(50 521.5 124.5)" fill="#e4e4e4" stroke="#5a5a5a" stroke-width="1.5"/><ellipse cx="521.5" cy="124.5" rx="2.2" ry="1.0" transform="rotate(50 521.5 124.5)" fill="#f4f4f4" stroke="#999" stroke-width="0.6"/><path d="M506.5 122.5L510.5 127.5L520.5 114" stroke="#f40000" stroke-width="2" fill="none"/><ellipse cx="541.5" cy="113" rx="5.5" ry="3" transform="rotate(30 541.5 113)" fill="#e4e4e4" stroke="#5a5a5a" stroke-width="1.5"/><ellipse cx="541.5" cy="113" rx="2.5" ry="0.9" transform="rotate(30 541.5 113)" fill="#f4f4f4" stroke="#999" stroke-width="0.6"/><ellipse cx="548.5" cy="118.5" rx="4.5" ry="2.5" transform="rotate(40 548.5 118.5)" fill="#e4e4e4" stroke="#5a5a5a" stroke-width="1.5"/><ellipse cx="548.5" cy="118.5" rx="2.0" ry="0.8" transform="rotate(40 548.5 118.5)" fill="#f4f4f4" stroke="#999" stroke-width="0.6"/><ellipse cx="554.5" cy="124.5" rx="5" ry="3.2" transform="rotate(55 554.5 124.5)" fill="#e4e4e4" stroke="#5a5a5a" stroke-width="1.5"/><ellipse cx="554.5" cy="124.5" rx="2.2" ry="1.0" transform="rotate(55 554.5 124.5)" fill="#f4f4f4" stroke="#999" stroke-width="0.6"/><ellipse cx="573" cy="114.5" rx="5.5" ry="3.2" transform="rotate(35 573 114.5)" fill="#e4e4e4" stroke="#5a5a5a" stroke-width="1.5"/><ellipse cx="573" cy="114.5" rx="2.5" ry="1.0" transform="rotate(35 573 114.5)" fill="#f4f4f4" stroke="#999" stroke-width="0.6"/><ellipse cx="585.5" cy="124.5" rx="5.5" ry="3.2" transform="rotate(40 585.5 124.5)" fill="#e4e4e4" stroke="#5a5a5a" stroke-width="1.5"/><ellipse cx="585.5" cy="124.5" rx="2.5" ry="1.0" transform="rotate(40 585.5 124.5)" fill="#f4f4f4" stroke="#999" stroke-width="0.6"/><defs><radialGradient id="gq2"><stop offset="0" stop-color="#bcbcbc"/><stop offset="1" stop-color="#7e7e7e"/></radialGradient></defs><rect x="605.5" y="109.5" width="14" height="14" fill="url(#gq2)" stroke="#4a4a4a" stroke-width="1.2"/><rect x="610.5" y="114.5" width="14.5" height="14.5" fill="url(#gq2)" stroke="#4a4a4a" stroke-width="1.2"/><rect x="604.1" y="108.1" width="2.5" height="2.5" fill="#f40000"/><rect x="623.1" y="108.1" width="2.5" height="2.5" fill="#f40000"/><rect x="604.1" y="127.1" width="2.5" height="2.5" fill="#f40000"/><rect x="623.1" y="127.1" width="2.5" height="2.5" fill="#f40000"/><rect x="637.5" y="109.5" width="14" height="14" fill="url(#gq2)" stroke="#4a4a4a" stroke-width="1.2"/><rect x="642.5" y="114.5" width="14" height="14" fill="url(#gq2)" stroke="#4a4a4a" stroke-width="1.2"/><rect x="636.1" y="108.1" width="2.5" height="2.5" fill="#f40000"/><rect x="650.1" y="108.1" width="2.5" height="2.5" fill="#f40000"/><rect x="641.1" y="113.1" width="2.5" height="2.5" fill="#f40000"/><rect x="655.1" y="113.1" width="2.5" height="2.5" fill="#f40000"/><rect x="636.1" y="122.1" width="2.5" height="2.5" fill="#f40000"/><rect x="650.1" y="122.1" width="2.5" height="2.5" fill="#f40000"/><rect x="641.1" y="127.1" width="2.5" height="2.5" fill="#f40000"/><rect x="655.1" y="127.1" width="2.5" height="2.5" fill="#f40000"/><path d="M672 107.5L695 111.8M672 121.5L695 130.5" stroke="#111" stroke-width="1.5"/><polygon points="677.5,110 689,112.2 689,125.8 677.5,121" fill="#dcdcdc" stroke="#111" stroke-width="1.5"/><path d="M683.2 111V123.5M677.5 115.5L689 118.6" stroke="#111" stroke-width="1.4"/><path d="M703.5 107.5L726.5 111.8M703.5 121.5L726.5 130.5" stroke="#111" stroke-width="1.5"/><polygon points="709.5,110 720.5,112.2 720.5,125.8 709.5,121" fill="#f0f0f0" stroke="#111" stroke-width="1.5"/><path d="M735 107.5L758 111.8M735 121.5L758 130.5" stroke="#111" stroke-width="1.5"/><polygon points="741.5,110 752.5,112.2 752.5,125.8 741.5,121" fill="#f40000" stroke="#600" stroke-width="0.6"/><path d="M752.8 112.5V126" stroke="#222" stroke-width="1.2"/><rect x="743" y="112.5" width="3" height="4" fill="#f66" opacity="0.6"/><path d="M767.5 107.5L790.5 111.8M767.5 121.5L790.5 130.5" stroke="#111" stroke-width="1.5"/><polygon points="775,111.5 784.5,113.5 784.5,127.5 775,123.5" fill="#f40000" stroke="#600" stroke-width="0.6"/><path d="M784.8 113.5V127.8" stroke="#222" stroke-width="1.4"/><circle cx="777.5" cy="120" r="1" fill="#111"/><rect x="776" y="113.5" width="2.5" height="3" fill="#f66" opacity="0.6"/><polygon points="41.0,143.5 41.0,161.2 44.8,157.9 48.5,165.1 51.8,164.1 48.4,157.0 54.0,156.5" fill="#7a7a7a" stroke="#444" stroke-width="0.8" stroke-linejoin="round"/><polygon points="46,173 57,184 46,195 35,184" fill="#2c2c34"/><polygon points="46.0,175.2 48.6,178.2 43.4,178.2" fill="#9a9a9a"/><polygon points="54.8,184.0 51.8,186.6 51.8,181.4" fill="#9a9a9a"/><polygon points="46.0,192.8 43.4,189.8 48.6,189.8" fill="#9a9a9a"/><polygon points="37.2,184.0 40.2,181.4 40.2,186.6" fill="#9a9a9a"/><rect x="41.0" y="179.0" width="3.8" height="3.8" fill="#fff"/><rect x="47.2" y="179.0" width="3.8" height="3.8" fill="#fff"/><rect x="41.0" y="185.2" width="3.8" height="3.8" fill="#fff"/><rect x="47.2" y="185.2" width="3.8" height="3.8" fill="#fff"/><path d="M56 191L58.8 193.5L56 196Z" fill="#000"/><defs><radialGradient id="gb" cx="0.4" cy="0.35"><stop offset="0" stop-color="#f0f0f0"/><stop offset="1" stop-color="#7a7a7a"/></radialGradient></defs><rect x="34.5" y="206.5" width="16" height="15" rx="2" fill="#555" stroke="#333"/><circle cx="42.3" cy="213.8" r="5.2" fill="url(#gb)"/><path d="M50 221.8H57.5V219" stroke="#444" stroke-width="1.3" fill="none"/><rect x="50" y="212" width="1.6" height="3" fill="#222"/><path d="M39.5 243L51.5 257M52 242.5L39 256.5M37.5 251.5L53.5 248.5" stroke="#111" stroke-width="1.3"/><circle cx="45.5" cy="250" r="2.4" fill="#f40000"/><circle cx="45" cy="249.4" r="0.7" fill="#fbb"/><path d="M44.7 269.3L56.3 275.2L35.5 279.3L49.7 288.5" stroke="#111" stroke-width="1.2" fill="none"/><circle cx="56.3" cy="275.2" r="1.9" fill="#f40000"/><circle cx="35.5" cy="279.3" r="1.9" fill="#f40000"/><circle cx="49.7" cy="288.5" r="1.9" fill="#f40000"/><circle cx="44.7" cy="269.3" r="1.3" fill="#fff" stroke="#f40000" stroke-width="0.9"/><polygon points="44.3,299.7 56.3,305.2 49.7,319.3 35.5,309.7" fill="#8c8c8c" stroke="#111" stroke-width="1.5" stroke-linejoin="round"/><circle cx="56.3" cy="305.2" r="1.9" fill="#f40000"/><circle cx="35.5" cy="309.7" r="1.9" fill="#f40000"/><circle cx="49.7" cy="319.3" r="1.9" fill="#f40000"/><circle cx="44.5" cy="299.7" r="1.3" fill="#fff" stroke="#f40000" stroke-width="0.9"/><polygon points="44.7,328.5 56.5,333 55.5,338.5 44.7,334" fill="#6a6a6a"/><polygon points="56.5,333 35.5,336.5 36.3,342 55.5,338.5" fill="#8e8e8e"/><polygon points="35.5,337 49.5,345.5 49.3,350.5 36.3,342" fill="#5a5a5a"/><path d="M44.7 328.5L56.5 333L35.5 336.8L49.5 345.5" stroke="#333" stroke-width="0.8" fill="none"/><circle cx="55.5" cy="338.2" r="1.8" fill="#f40000"/><circle cx="36.3" cy="342" r="1.8" fill="#f40000"/><circle cx="49.3" cy="350.3" r="1.8" fill="#f40000"/><circle cx="44.7" cy="333.7" r="1.1" fill="#fff" stroke="#f40000" stroke-width="0.8"/><polygon points="44.7,359.5 56.5,364 56.3,368.8 49.3,380 36.3,372 35.8,366.5" fill="#2e2e2e"/><polygon points="44.7,360.3 55.5,364.3 48.5,369.5 37,366.3" fill="#a0a0a0"/><polygon points="36.5,367.5 48.5,371 49,378.5 37,371.5" fill="#7a7a7a"/><polygon points="49.8,371 55.8,365.5 55.8,368.5 50,378" fill="#5c5c5c"/><circle cx="56.3" cy="368.8" r="1.8" fill="#f40000"/><circle cx="36.3" cy="372" r="1.8" fill="#f40000"/><circle cx="49.3" cy="380" r="1.8" fill="#f40000"/><circle cx="44.7" cy="364.5" r="1.1" fill="#fff" stroke="#f40000" stroke-width="0.8"/><polygon points="38.8,391 56.3,397.7 49.7,410.2 35.5,401.3" fill="#6e6e6e" stroke="#1c1c1c" stroke-width="1.3" stroke-linejoin="round"/><path d="M44.3 392.5L48 401L49.7 410M48 401L56 398" stroke="#2a2a2a" stroke-width="0.9" fill="none"/><circle cx="56.3" cy="397.7" r="1.8" fill="#f40000"/><circle cx="35.5" cy="401.3" r="1.8" fill="#f40000"/><circle cx="49.7" cy="410.2" r="1.8" fill="#f40000"/><circle cx="44.3" cy="392" r="1" fill="#fff" stroke="#f40000" stroke-width="0.8"/><defs><radialGradient id="gl" cx="0.4" cy="0.35"><stop offset="0" stop-color="#fff"/><stop offset="0.7" stop-color="#e6e6e6"/><stop offset="1" stop-color="#b8b8b8"/></radialGradient></defs><path d="M42.5 433.5C38 430 37.5 422 43 419.5C48.5 417 55 420.5 54 427C53.5 430.5 51 432 50 434.5V437H43.5Z" fill="url(#gl)"/><rect x="43.5" y="436.5" width="6.5" height="5.5" rx="1" fill="#6a6a6a"/><path d="M43.5 438.5H50M43.5 440.5H50" stroke="#aaa" stroke-width="0.7"/><defs><radialGradient id="gs"><stop offset="0" stop-color="#fff"/><stop offset="0.25" stop-color="#333"/><stop offset="0.55" stop-color="#111"/><stop offset="0.8" stop-color="#555"/><stop offset="1" stop-color="#2a2a2a"/></radialGradient></defs><rect x="34.5" y="449.5" width="23" height="22.5" rx="4" fill="#c4c4c4" stroke="#aaa"/><circle cx="46" cy="460.8" r="10" fill="url(#gs)"/><circle cx="46" cy="460.8" r="2" fill="#eee"/><path d="M35.5 487L44 483.5L45.5 481L53 481L54.5 484L57.5 485.5V499L42 502.5L35.5 499.5Z" fill="#2c2c2c"/><path d="M36.5 488L42.5 486.5V500.5L36.5 498.5Z" fill="#9c9c9c"/><circle cx="50.5" cy="492.5" r="5.8" fill="#151515" stroke="#888" stroke-width="1.2"/><circle cx="52" cy="494" r="2.2" fill="#ddd"/><rect x="45" y="481.5" width="7" height="3" fill="#bbb"/><path d="M56 499L58.8 501.5L56 504Z" fill="#000"/><rect x="39" y="512.5" width="14" height="11" fill="#ddd" stroke="#555" stroke-width="0.9"/><rect x="42.5" y="514" width="9" height="7.5" fill="#111"/><path d="M39 513V523" stroke="#fff" stroke-width="2"/><polygon points="34.5,525.5 44,523 53,524.5 43,528" fill="#333"/><polygon points="37,530 54,526 58,528 41,532.5" fill="#444"/><path d="M39 530.5L56 526.7" stroke="#aaa" stroke-width="0.8" stroke-dasharray="1 1"/><path d="M37.2 541L58.8 545.2M36.3 555.2L58.8 564.3" stroke="#111" stroke-width="1.5"/><polygon points="41.3,543.5 53,546 53,561 41.3,556.5" fill="#d8d8d8" stroke="#111" stroke-width="1.5"/><path d="M47.2 545V558.5M41.3 549.8L53 553.2" stroke="#111" stroke-width="1.4"/><path d="M56.3 556.8L58.8 559L56.3 561.2Z" fill="#000"/><path d="M44.7 577.3L56.3 582.7L36 587.3L49.7 596.5" stroke="#111" stroke-width="1.3" fill="none"/><circle cx="44.7" cy="577.3" r="1.2" fill="#fff" stroke="#333" stroke-width="0.8"/><circle cx="56.3" cy="582.7" r="1.5" fill="#999" stroke="#333" stroke-width="0.8"/><circle cx="36" cy="587.3" r="2" fill="#f40000"/><circle cx="49.7" cy="596.5" r="1.9" fill="#444"/><path d="M38.8 577V585M34.8 581H42.8" stroke="#fff" stroke-width="1.8"/><path d="M44.7 609.3L56.3 614.7L36 619.3L49.7 628.5" stroke="#111" stroke-width="1.3" fill="none"/><circle cx="44.7" cy="609.3" r="1.2" fill="#fff" stroke="#333" stroke-width="0.8"/><circle cx="56.3" cy="614.7" r="1.5" fill="#999" stroke="#333" stroke-width="0.8"/><circle cx="36" cy="619.3" r="2" fill="#f40000"/><circle cx="49.7" cy="628.5" r="1.9" fill="#444"/><path d="M34.8 609L41 616M41 609L34.8 616" stroke="#fff" stroke-width="1.7"/><path d="M46.3 649.5L49 653H43.6ZM46.3 663L49 659.5H43.6ZM39.3 656.3L43 653.6V659ZM53.3 656.3L49.6 653.6V659Z" fill="#2e2e2e"/><path d="M46.3 653.5L49 656.3L46.3 659L43.6 656.3Z" fill="#8a8a8a"/><g fill="none" stroke="#2e2e2e" stroke-width="1.2"><path d="M40.5 685.5A6.3 6.3 0 0 1 52 684.5"/><path d="M52.2 690A6.3 6.3 0 0 1 40.8 691.5"/></g><path d="M38.8 682L42.3 686.3L38.5 687.5ZM53.8 693.5L50.3 689.2L54.2 688Z" fill="#2e2e2e"/><circle cx="46.3" cy="687.7" r="1.5" fill="#2e2e2e"/><path d="M39 719.8V716.5A4.9 4.9 0 0 1 48.8 716.5V719.8Z" fill="#a4a4a4" stroke="#555" stroke-width="0.9"/><path d="M43 727.3H49.8L46.4 731Z" fill="#000"/><polygon points="815.0,105.0 815.0,123.1 818.9,119.7 822.6,127.0 826.0,126.0 822.5,118.8 828.3,118.3" fill="#7a7a7a" stroke="#444" stroke-width="0.8" stroke-linejoin="round"/><path d="M812 139.5H824" stroke="#fff" stroke-width="1"/><path d="M812 141.5H824" stroke="#fff" stroke-width="1"/><path d="M812 143.5H824" stroke="#fff" stroke-width="1"/><path d="M812 145.5H824" stroke="#fff" stroke-width="1"/><path d="M812 147.5H824" stroke="#fff" stroke-width="1"/><path d="M812 149.5H824" stroke="#fff" stroke-width="1"/><path d="M812 151.5H824" stroke="#fff" stroke-width="1"/><path d="M812 153.5H824" stroke="#fff" stroke-width="1"/><path d="M816.5 140.5H821" stroke="#111" stroke-width="1.0"/><path d="M818.8 140.5H821" stroke="#111" stroke-width="1.9" stroke-linecap="round"/><path d="M814.0 143.5H821" stroke="#111" stroke-width="1.0"/><path d="M817.5 143.5H821" stroke="#111" stroke-width="1.9" stroke-linecap="round"/><path d="M817.5 146.5H821" stroke="#111" stroke-width="1.0"/><path d="M819.2 146.5H821" stroke="#111" stroke-width="1.9" stroke-linecap="round"/><path d="M815.0 149.5H821" stroke="#111" stroke-width="1.0"/><path d="M818.0 149.5H821" stroke="#111" stroke-width="1.9" stroke-linecap="round"/><path d="M817.0 152.5H821" stroke="#111" stroke-width="1.0"/><path d="M819.0 152.5H821" stroke="#111" stroke-width="1.9" stroke-linecap="round"/><polygon points="820.5,138 832,141 832,146 826.5,154.5 818.5,150.5 819,143" fill="#2c2c2c"/><polygon points="821,139 831.2,141.6 829.5,145 820,142.5" fill="#a4a4a4"/><polygon points="819.8,143.8 829,146.5 827,150 819.3,147" fill="#8a8a8a"/><polygon points="819.3,148 826.7,151 826.2,153 819.3,150" fill="#6a6a6a"/><circle cx="820.5" cy="140.5" r="1.2" fill="#f40000"/><circle cx="831" cy="145" r="1.2" fill="#f40000"/><circle cx="825.2" cy="155.5" r="1.7" fill="#f40000"/><path d="M812.5 147.5H815.5" stroke="#f40000" stroke-width="1.1"/><polygon points="811.5,177.5 823.5,187.0 833.5,174.0 833.5,171.5 823.5,184.5 811.5,175" fill="#222"/><polygon points="811.5,175 822,166.5 833.5,171.5 823.5,184.5" fill="#f4f4f4"/><polygon points="811.5,175.0 815.0,172.2 818.9,174.8 815.5,178.2" fill="#151515"/><polygon points="819.5,181.3 822.9,177.5 826.8,180.2 823.5,184.5" fill="#151515"/><polygon points="818.9,174.8 822.4,171.5 826.3,173.7 822.9,177.5" fill="#151515"/><polygon points="818.5,169.3 822.0,166.5 825.8,168.2 822.4,171.5" fill="#151515"/><polygon points="826.3,173.7 829.7,169.8 833.5,171.5 830.2,175.8" fill="#151515"/><path d="M812 197.5H824" stroke="#fff" stroke-width="1"/><path d="M812 199.5H824" stroke="#fff" stroke-width="1"/><path d="M812 201.5H824" stroke="#fff" stroke-width="1"/><path d="M812 203.5H824" stroke="#fff" stroke-width="1"/><path d="M812 205.5H824" stroke="#fff" stroke-width="1"/><path d="M812 207.5H824" stroke="#fff" stroke-width="1"/><path d="M812 209.5H824" stroke="#fff" stroke-width="1"/><path d="M812 211.5H824" stroke="#fff" stroke-width="1"/><path d="M812 213.5H824" stroke="#fff" stroke-width="1"/><path d="M816.5 199.5H821" stroke="#111" stroke-width="1.0"/><path d="M818.8 199.5H821" stroke="#111" stroke-width="1.9" stroke-linecap="round"/><path d="M814.0 202.5H821" stroke="#111" stroke-width="1.0"/><path d="M817.5 202.5H821" stroke="#111" stroke-width="1.9" stroke-linecap="round"/><path d="M817.5 205.5H821" stroke="#111" stroke-width="1.0"/><path d="M819.2 205.5H821" stroke="#111" stroke-width="1.9" stroke-linecap="round"/><path d="M815.0 208.5H821" stroke="#111" stroke-width="1.0"/><path d="M818.0 208.5H821" stroke="#111" stroke-width="1.9" stroke-linecap="round"/><path d="M817.0 211.5H821" stroke="#111" stroke-width="1.0"/><path d="M819.0 211.5H821" stroke="#111" stroke-width="1.9" stroke-linecap="round"/><path d="M819.0 201H822" stroke="#f40000" stroke-width="0.7"/><path d="M820.5 201H822" stroke="#f40000" stroke-width="1.6" stroke-linecap="round"/><path d="M816.5 204H822" stroke="#f40000" stroke-width="0.7"/><path d="M819.2 204H822" stroke="#f40000" stroke-width="1.6" stroke-linecap="round"/><path d="M820.0 207H822" stroke="#f40000" stroke-width="0.7"/><path d="M821.0 207H822" stroke="#f40000" stroke-width="1.6" stroke-linecap="round"/><path d="M817.5 210H822" stroke="#f40000" stroke-width="0.7"/><path d="M819.8 210H822" stroke="#f40000" stroke-width="1.6" stroke-linecap="round"/><polygon points="819,208.2 827.5,216.0 833.5,203.2 833.5,201 827.5,213.8 819,206" fill="#2a2a2a"/><polygon points="819,206 825.5,197.5 833.5,201 827.5,213.8" fill="#f40000" stroke="#2a2a2a" stroke-width="0.6"/><path d="M821.2 203.2L829.5 209.5M821.8 208.6L828.2 198.7" stroke="#401010" stroke-width="0.9"/><path d="M823.3 200.3L831.5 205.3M824.7 211.2L830.8 199.8" stroke="#401010" stroke-width="0.9"/><polygon points="822.5,201 826.5,198.5 829.5,200 826,203.5" fill="#f06a50" opacity="0.8"/><path d="M828.0 237.0L832.8 241.8" stroke="#9a9a9a" stroke-width="2"/><path d="M826.8 239.8L826.8 246.6" stroke="#9a9a9a" stroke-width="2"/><path d="M824.0 241.0L819.2 245.8" stroke="#9a9a9a" stroke-width="2"/><path d="M821.2 239.8L814.4 239.8" stroke="#9a9a9a" stroke-width="2"/><path d="M820.0 237.0L815.2 232.2" stroke="#9a9a9a" stroke-width="2"/><path d="M821.2 234.2L821.2 227.4" stroke="#9a9a9a" stroke-width="2"/><path d="M824.0 233.0L828.8 228.2" stroke="#9a9a9a" stroke-width="2"/><path d="M826.8 234.2L833.6 234.2" stroke="#9a9a9a" stroke-width="2"/><path d="M827.0 236.0L831.8 240.8" stroke="#f0a848" stroke-width="2"/><path d="M825.8 238.8L825.8 245.6" stroke="#f0a848" stroke-width="2"/><path d="M823.0 240.0L818.2 244.8" stroke="#f0a848" stroke-width="2"/><path d="M820.2 238.8L813.4 238.8" stroke="#f0a848" stroke-width="2"/><path d="M819.0 236.0L814.2 231.2" stroke="#f0a848" stroke-width="2"/><path d="M820.2 233.2L820.2 226.4" stroke="#f0a848" stroke-width="2"/><path d="M823.0 232.0L827.8 227.2" stroke="#f0a848" stroke-width="2"/><path d="M825.8 233.2L832.6 233.2" stroke="#f0a848" stroke-width="2"/><circle cx="823" cy="236" r="4.2" fill="#f8d8a0"/><circle cx="822.5" cy="235.5" r="2.8" fill="#fff"/><polygon points="812.5,266.7 825,276.7 833.5,263.7 833.5,261.5 825,274.5 812.5,264.5" fill="#1e1e1e"/><polygon points="812.5,264.5 822.5,256.5 833.5,261.5 825,274.5" fill="#1a6ee0" stroke="#1e1e1e" stroke-width="0.6"/><path d="M815.8 261.8L827.8 270.2M816.7 267.8L826.2 258.2" stroke="#0a2a66" stroke-width="0.9"/><path d="M819.2 259.2L830.7 265.8M820.8 271.2L829.8 259.8" stroke="#0a2a66" stroke-width="0.9"/><polygon points="822,260 826,258.5 829,260.5 825,263" fill="#6ab0ff" opacity="0.7"/><circle cx="818" cy="289.5" r="2" fill="#f40000"/><circle cx="829" cy="288" r="2" fill="#f40000"/><circle cx="814" cy="296" r="1.8" fill="#f40000"/><circle cx="822" cy="298" r="1.5" fill="#f40000"/><circle cx="831" cy="297.5" r="1.9" fill="#f40000"/><circle cx="819" cy="304" r="1.5" fill="#f40000"/><circle cx="826" cy="304.5" r="1.6" fill="#f40000"/><circle cx="824" cy="293" r="1" fill="#f40000"/><path d="M818 289.5L822 298L829 288M814 296L822 298L831 297.5M822 298L819 304" stroke="#f66" stroke-width="0.6" stroke-dasharray="1 1" fill="none"/><path d="M813 317.5H826" stroke="#fff" stroke-width="1"/><path d="M813 319.5H826" stroke="#fff" stroke-width="1"/><path d="M813 321.5H826" stroke="#fff" stroke-width="1"/><path d="M813 323.5H826" stroke="#fff" stroke-width="1"/><path d="M813 325.5H826" stroke="#fff" stroke-width="1"/><path d="M813 327.5H826" stroke="#fff" stroke-width="1"/><path d="M813 329.5H826" stroke="#fff" stroke-width="1"/><path d="M813 331.5H826" stroke="#fff" stroke-width="1"/><path d="M813 333.5H826" stroke="#fff" stroke-width="1"/><path d="M817.5 319H822" stroke="#111" stroke-width="1.0"/><path d="M819.8 319H822" stroke="#111" stroke-width="1.9" stroke-linecap="round"/><path d="M815.0 322H822" stroke="#111" stroke-width="1.0"/><path d="M818.5 322H822" stroke="#111" stroke-width="1.9" stroke-linecap="round"/><path d="M818.5 325H822" stroke="#111" stroke-width="1.0"/><path d="M820.2 325H822" stroke="#111" stroke-width="1.9" stroke-linecap="round"/><path d="M816.0 328H822" stroke="#111" stroke-width="1.0"/><path d="M819.0 328H822" stroke="#111" stroke-width="1.9" stroke-linecap="round"/><path d="M818.0 331H822" stroke="#111" stroke-width="1.0"/><path d="M820.0 331H822" stroke="#111" stroke-width="1.9" stroke-linecap="round"/><path d="M816.5 334H822" stroke="#111" stroke-width="1.0"/><path d="M819.2 334H822" stroke="#111" stroke-width="1.9" stroke-linecap="round"/><path d="M820 318.5C820 316.5 832 316.5 832 318.5L830.5 334C830.5 336.5 821.5 336.5 821.5 334Z" fill="#6a6a6a" stroke="#222" stroke-width="0.9"/><ellipse cx="826" cy="318.5" rx="6" ry="1.8" fill="#c8c8c8" stroke="#222" stroke-width="0.8"/><path d="M823.5 321V335.5M828 321V335.5" stroke="#bbb" stroke-width="1.2"/><path d="M825.8 321V336" stroke="#222" stroke-width="1"/><g transform="translate(811,345.5)"><path d="M1 1.5H13" stroke="#fff" stroke-width="1"/><path d="M1 3.5H13" stroke="#fff" stroke-width="1"/><path d="M1 5.5H13" stroke="#fff" stroke-width="1"/><path d="M1 7.5H13" stroke="#fff" stroke-width="1"/><path d="M1 9.5H13" stroke="#fff" stroke-width="1"/><path d="M1 11.5H13" stroke="#fff" stroke-width="1"/><path d="M1 13.5H13" stroke="#fff" stroke-width="1"/><path d="M1 15.5H13" stroke="#fff" stroke-width="1"/><path d="M1 17.5H13" stroke="#fff" stroke-width="1"/><path d="M1 19.5H13" stroke="#fff" stroke-width="1"/><g stroke="#2a2a2a" stroke-width="1.3" fill="none"><path d="M9 5V18M2.5 11.5H15.5"/><path d="M13 4.5C13.5 9 20 9.5 21.5 4"/></g><path d="M9 3L11 6.5H7ZM9 20L11 16.5H7ZM0.5 11.5L4 9.5V13.5ZM17 11.5L13.5 9.5V13.5ZM21.5 1.5L23.5 5.5L19.5 5ZM11 3L15 2.5L14 6Z" fill="#2a2a2a"/><rect x="14.5" y="13.5" width="9" height="9" fill="#8a8a8a" stroke="#333" stroke-width="1"/><rect x="10.8" y="18" width="7" height="4.6" fill="#fff" stroke="#f40000" stroke-width="1.3"/></g><path d="M814.5 376.5H821.5L825.5 380.5V392.5H814.5Z" fill="#f6f6f6" stroke="#555" stroke-width="1"/><path d="M821.5 376.5V380.5H825.5" fill="none" stroke="#555" stroke-width="0.9"/><path d="M817 381C817.5 388.5 822 392.5 827.5 393" fill="none" stroke="#f40000" stroke-width="3"/><polygon points="826,388.5 833.5,394 825.5,398.5" fill="#f40000"/><path d="M817 382C817.5 386 819 388.5 821 390" stroke="#f8a040" stroke-width="1.2" fill="none"/><g stroke="#555" stroke-width="1.2" fill="none"><path d="M812.5 714L830.5 715.5L829 733L814 731.5Z" fill="#e8e8e8"/><path d="M818.5 714.5L819 732M824.5 715L824 732.5M813 720L830 721M813.5 726L829.5 727"/></g><path d="M810.5 712L814.5 716M832.5 713.5L828.5 717.5M831 735L827.5 731.5M812 733.5L815.5 730" stroke="#333" stroke-width="1.3"/><path d="M816.7 725.5L810.8 732.6" stroke="#222" stroke-width="2.2" stroke-linecap="round"/><circle cx="819.5" cy="722" r="4.6" fill="#e8e8e8" stroke="#555" stroke-width="1.4"/><circle cx="818.5" cy="721" r="2.1" fill="#fff"/><polygon points="842,724.2 856.5,734.7 866,720.7 866,718.5 856.5,732.5 842,722" fill="#2a2a2a"/><polygon points="842,722 853.5,713.5 866,718.5 856.5,732.5" fill="#f40000" stroke="#2a2a2a" stroke-width="0.6"/><polygon points="848,721.5 854,717 861,719.8 855.5,727" fill="#f8f8f8" stroke="#a00" stroke-width="0.7"/><path d="M851 721L856 722.5M853 718.5L853.5 725" stroke="#c33" stroke-width="0.8"/><path d="M847.9 726.8L842.1 733.6" stroke="#222" stroke-width="2.2" stroke-linecap="round"/><circle cx="850.5" cy="723.5" r="4.4" fill="#e8e8e8" stroke="#555" stroke-width="1.4"/><circle cx="849.5" cy="722.5" r="2.0" fill="#fff"/><polygon points="873,722 884.5,713.5 896.5,718.5 887.5,732.5" fill="#8e8e8e" stroke="#2a2a2a" stroke-width="1.2" stroke-linejoin="round"/><path d="M878 718.5L890 723.5" stroke="#555" stroke-width="0.8"/><circle cx="873.5" cy="725" r="1.5" fill="#f40000"/><circle cx="896" cy="719.5" r="1.5" fill="#f40000"/><circle cx="888" cy="733.5" r="1.5" fill="#f40000"/><circle cx="884.5" cy="714" r="1.5" fill="#f40000"/><path d="M878.9 726.8L873.1 733.6" stroke="#222" stroke-width="2.2" stroke-linecap="round"/><circle cx="881.5" cy="723.5" r="4.4" fill="#e8e8e8" stroke="#555" stroke-width="1.4"/><circle cx="880.5" cy="722.5" r="2.0" fill="#fff"/><polygon points="904,724.2 918.5,734.7 928,720.7 928,718.5 918.5,732.5 904,722" fill="#2a2a2a"/><polygon points="904,722 915.5,713.5 928,718.5 918.5,732.5" fill="#f40000" stroke="#2a2a2a" stroke-width="0.6"/><path d="M907.8 719.2L921.7 727.8M908.8 725.5L919.7 715.2" stroke="#401010" stroke-width="0.9"/><path d="M911.7 716.3L924.8 723.2M913.7 729.0L923.8 716.8" stroke="#401010" stroke-width="0.9"/><polygon points="913,717.5 917.5,715 921.5,717 917,721" fill="#f06a50" opacity="0.8"/><path d="M909.9 726.8L904.1 733.6" stroke="#222" stroke-width="2.2" stroke-linecap="round"/><circle cx="912.5" cy="723.5" r="4.4" fill="#e8e8e8" stroke="#555" stroke-width="1.4"/><circle cx="911.5" cy="722.5" r="2.0" fill="#fff"/><polygon points="935,724.2 949.5,734.7 959,720.7 959,718.5 949.5,732.5 935,722" fill="#2a2a2a"/><polygon points="935,722 946.5,713.5 959,718.5 949.5,732.5" fill="#f40000" stroke="#2a2a2a" stroke-width="0.6"/><path d="M938.8 719.2L952.7 727.8M939.8 725.5L950.7 715.2" stroke="#401010" stroke-width="0.9"/><path d="M942.7 716.3L955.8 723.2M944.7 729.0L954.8 716.8" stroke="#401010" stroke-width="0.9"/><polygon points="946.0,719.0 946.0,731.7 948.7,729.4 951.4,734.6 953.8,733.8 951.3,728.7 955.4,728.4" fill="#e8e8e8" stroke="#777" stroke-width="0.8" stroke-linejoin="round"/><path d="M965 713H970.5L965 718.5ZM988.5 713H983L988.5 718.5ZM965 735.5H970.5L965 730ZM988.5 735.5H983L988.5 730Z" fill="#f40000"/><path d="M968 720L974 717.5L975 715.5L981 715.5L982 717.5L985.5 719V731L974 733.5L968 731Z" fill="#2c2c2c"/><path d="M980 719.5H984.5V730.5H980Z" fill="#9a9a9a"/><circle cx="974.5" cy="725.5" r="4.6" fill="#111" stroke="#999" stroke-width="1.1"/><circle cx="975.5" cy="726.8" r="1.8" fill="#ddd"/><rect x="975.5" y="716" width="5" height="2.2" fill="#bbb"/></svg>
</body></html>
